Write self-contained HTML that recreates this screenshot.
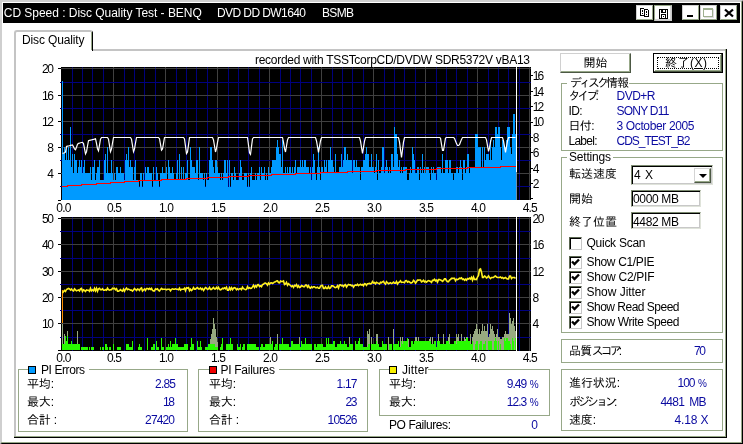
<!DOCTYPE html>
<html><head><meta charset="utf-8"><title>CD Speed : Disc Quality Test</title>
<style>
html,body{margin:0;padding:0;background:#fff;}
body{width:743px;height:444px;position:relative;overflow:hidden;font-family:"Liberation Sans","IPAGothic","Noto Sans CJK JP",sans-serif;font-size:12px;}
.t{position:absolute;white-space:pre;line-height:15px;height:15px;}
</style></head><body>
<div style="position:absolute;left:0px;top:0px;width:743px;height:444px;box-sizing:border-box;background:#fff;border:solid;border-width:2px 1px 1px 2px;border-color:#cfcfcf #000 #000 #cfcfcf;"></div>
<div style="position:absolute;left:741px;top:1px;width:1px;height:442px;box-sizing:border-box;background:#97a888"></div>
<div style="position:absolute;left:1px;top:442px;width:741px;height:1px;box-sizing:border-box;background:#97a888"></div>
<div style="position:absolute;left:3px;top:3px;width:737px;height:20px;box-sizing:border-box;background:#000"></div>
<div style="position:absolute;left:636px;top:5px;width:17px;height:15px;box-sizing:border-box;background:#fff;border:1px solid;border-color:#d0d0d0 #97a888 #97a888 #d0d0d0;"><svg width="15" height="13" viewBox="0 0 15 13" style="position:absolute;left:0;top:0" shape-rendering="crispEdges"><path d="M3.5 2.5h3l1 1v6h-4z" fill="#fff" stroke="#000"/><path d="M7.5 3.5h3l1 1v6h-4z" fill="#fff" stroke="#000"/><path d="M5 4h1v2h-1zM5 7h1v1h-1zM9 5h1v2h-1zM9 8h1v1h-1z" fill="#000"/></svg></div>
<div style="position:absolute;left:654px;top:5px;width:18px;height:16px;box-sizing:border-box;background:#fff;border:1px solid;border-color:#97a888 #c8c8c8 #c8c8c8 #97a888;box-shadow:inset -1px -1px 0 #d4d4d4;"><svg width="16" height="14" viewBox="0 0 16 14" style="position:absolute;left:0;top:0" shape-rendering="crispEdges"><path d="M4.5 3.5h8v9h-8z" fill="#fff" stroke="#000"/><path d="M6 4h5v3h-5z" fill="#000"/><path d="M8 4h2v2h-2z" fill="#fff"/><path d="M6 9h1v3h-1zM10 9h1v3h-1zM6 8h5v1h-5zM8 10h1v1h-1z" fill="#000"/></svg></div>
<div style="position:absolute;left:682px;top:5px;width:17px;height:15px;box-sizing:border-box;background:#fff;border:1px solid;border-color:#d0d0d0 #97a888 #97a888 #d0d0d0;"><div style="position:absolute;left:4px;top:9px;width:6px;height:2px;background:#000"></div></div>
<div style="position:absolute;left:700px;top:5px;width:17px;height:15px;box-sizing:border-box;background:#fff;border:1px solid;border-color:#d0d0d0 #97a888 #97a888 #d0d0d0;"><div style="position:absolute;left:2px;top:2px;width:10px;height:9px;box-sizing:border-box;border:1px solid #9fb090;border-top-width:2px;box-shadow:1px 1px 0 #e0e0e0"></div></div>
<div style="position:absolute;left:720px;top:5px;width:17px;height:15px;box-sizing:border-box;background:#fff;border:1px solid;border-color:#d0d0d0 #97a888 #97a888 #d0d0d0;"><svg width="15" height="13" viewBox="0 0 15 13" style="position:absolute;left:0;top:0"><path d="M4 3.5l8 7M12 3.5l-8 7" stroke="#000" stroke-width="2.3"/></svg></div>
<div style="position:absolute;left:14px;top:49px;width:2px;height:389px;box-sizing:border-box;background:#c4c4c4"></div>
<div style="position:absolute;left:92px;top:49px;width:634px;height:2px;box-sizing:border-box;background:#c4c4c4"></div>
<div style="position:absolute;left:725px;top:49px;width:1px;height:388px;box-sizing:border-box;background:#97a888"></div>
<div style="position:absolute;left:726px;top:49px;width:1px;height:389px;box-sizing:border-box;background:#000"></div>
<div style="position:absolute;left:14px;top:436px;width:712px;height:1px;box-sizing:border-box;background:#97a888"></div>
<div style="position:absolute;left:14px;top:437px;width:713px;height:1px;box-sizing:border-box;background:#000"></div>
<div style="position:absolute;left:14px;top:30px;width:79px;height:21px;box-sizing:border-box;border-top:2px solid #c4c4c4;border-left:2px solid #c4c4c4;border-right:1px solid #000;border-radius:3px 3px 0 0;background:#fff"></div>
<div style="position:absolute;left:91px;top:32px;width:1px;height:18px;box-sizing:border-box;background:#97a888"></div>
<div style="position:absolute;left:560px;top:53px;width:71px;height:20px;box-sizing:border-box;background:#fff;border:1px solid;border-color:#d0d0d0 #4c5844 #4c5844 #d0d0d0;box-shadow:inset -1px -1px 0 #97a888;"></div>
<div style="position:absolute;left:653px;top:53px;width:70px;height:20px;box-sizing:border-box;background:#fff;border:1px solid #000;box-shadow:inset -1px -1px 0 #4c5844, inset 1px 1px 0 #fff, inset -2px -2px 0 #97a888;"><div style="position:absolute;left:3px;top:3px;right:3px;bottom:3px;border:1px dotted #000"></div></div>
<div style="position:absolute;left:561px;top:83px;width:1px;height:68px;box-sizing:border-box;background:#97a888"></div>
<div style="position:absolute;left:722px;top:83px;width:1px;height:68px;box-sizing:border-box;background:#97a888"></div>
<div style="position:absolute;left:561px;top:150px;width:162px;height:1px;box-sizing:border-box;background:#97a888"></div>
<div style="position:absolute;left:561px;top:83px;width:6px;height:1px;box-sizing:border-box;background:#97a888"></div>
<div style="position:absolute;left:629px;top:83px;width:94px;height:1px;box-sizing:border-box;background:#97a888"></div>
<div style="position:absolute;left:561px;top:157px;width:1px;height:176px;box-sizing:border-box;background:#97a888"></div>
<div style="position:absolute;left:722px;top:157px;width:1px;height:176px;box-sizing:border-box;background:#97a888"></div>
<div style="position:absolute;left:561px;top:332px;width:162px;height:1px;box-sizing:border-box;background:#97a888"></div>
<div style="position:absolute;left:561px;top:157px;width:6px;height:1px;box-sizing:border-box;background:#97a888"></div>
<div style="position:absolute;left:613px;top:157px;width:110px;height:1px;box-sizing:border-box;background:#97a888"></div>
<div style="position:absolute;left:561px;top:339px;width:1px;height:24px;box-sizing:border-box;background:#97a888"></div>
<div style="position:absolute;left:722px;top:339px;width:1px;height:24px;box-sizing:border-box;background:#97a888"></div>
<div style="position:absolute;left:561px;top:362px;width:162px;height:1px;box-sizing:border-box;background:#97a888"></div>
<div style="position:absolute;left:561px;top:339px;width:162px;height:1px;box-sizing:border-box;background:#97a888"></div>
<div style="position:absolute;left:561px;top:369px;width:1px;height:62px;box-sizing:border-box;background:#97a888"></div>
<div style="position:absolute;left:722px;top:369px;width:1px;height:62px;box-sizing:border-box;background:#97a888"></div>
<div style="position:absolute;left:561px;top:430px;width:162px;height:1px;box-sizing:border-box;background:#97a888"></div>
<div style="position:absolute;left:561px;top:369px;width:162px;height:1px;box-sizing:border-box;background:#97a888"></div>
<div style="position:absolute;left:18px;top:369px;width:1px;height:63px;box-sizing:border-box;background:#97a888"></div>
<div style="position:absolute;left:187px;top:369px;width:1px;height:63px;box-sizing:border-box;background:#97a888"></div>
<div style="position:absolute;left:18px;top:431px;width:170px;height:1px;box-sizing:border-box;background:#97a888"></div>
<div style="position:absolute;left:18px;top:369px;width:10px;height:1px;box-sizing:border-box;background:#97a888"></div>
<div style="position:absolute;left:89px;top:369px;width:99px;height:1px;box-sizing:border-box;background:#97a888"></div>
<div style="position:absolute;left:198px;top:369px;width:1px;height:63px;box-sizing:border-box;background:#97a888"></div>
<div style="position:absolute;left:367px;top:369px;width:1px;height:63px;box-sizing:border-box;background:#97a888"></div>
<div style="position:absolute;left:198px;top:431px;width:170px;height:1px;box-sizing:border-box;background:#97a888"></div>
<div style="position:absolute;left:198px;top:369px;width:11px;height:1px;box-sizing:border-box;background:#97a888"></div>
<div style="position:absolute;left:279px;top:369px;width:89px;height:1px;box-sizing:border-box;background:#97a888"></div>
<div style="position:absolute;left:379px;top:369px;width:1px;height:47px;box-sizing:border-box;background:#97a888"></div>
<div style="position:absolute;left:549px;top:369px;width:1px;height:47px;box-sizing:border-box;background:#97a888"></div>
<div style="position:absolute;left:379px;top:415px;width:171px;height:1px;box-sizing:border-box;background:#97a888"></div>
<div style="position:absolute;left:379px;top:369px;width:10px;height:1px;box-sizing:border-box;background:#97a888"></div>
<div style="position:absolute;left:428px;top:369px;width:122px;height:1px;box-sizing:border-box;background:#97a888"></div>
<div style="position:absolute;left:28px;top:366px;width:8px;height:8px;box-sizing:border-box;background:#009aff;border:1px solid #000"></div>
<div style="position:absolute;left:209px;top:366px;width:8px;height:8px;box-sizing:border-box;background:#f00000;border:1px solid #000"></div>
<div style="position:absolute;left:389px;top:366px;width:8px;height:8px;box-sizing:border-box;background:#f8f000;border:1px solid #000"></div>
<div style="position:absolute;left:631px;top:165px;width:82px;height:20px;box-sizing:border-box;background:#fff;border:1px solid;border-color:#7c8a70 #dfe3da #dfe3da #7c8a70;box-shadow:inset 1px 1px 0 #000, inset -1px -1px 0 #c8c8c8;"><div style="position:absolute;left:62px;top:2px;width:17px;height:15px;box-sizing:border-box;background:#fff;border:1px solid;border-color:#d4d4d4 #4c5844 #4c5844 #d4d4d4;box-shadow:inset -1px -1px 0 #97a888;"><div style="position:absolute;left:4px;top:5px;width:0;height:0;border-left:4px solid transparent;border-right:4px solid transparent;border-top:4px solid #000"></div></div></div>
<div style="position:absolute;left:631px;top:190px;width:70px;height:17px;box-sizing:border-box;background:#fff;border:1px solid;border-color:#7c8a70 #dfe3da #dfe3da #7c8a70;box-shadow:inset 1px 1px 0 #000, inset -1px -1px 0 #c8c8c8;"></div>
<div style="position:absolute;left:631px;top:212px;width:70px;height:17px;box-sizing:border-box;background:#fff;border:1px solid;border-color:#7c8a70 #dfe3da #dfe3da #7c8a70;box-shadow:inset 1px 1px 0 #000, inset -1px -1px 0 #c8c8c8;"></div>
<div style="position:absolute;left:569px;top:237px;width:13px;height:13px;box-sizing:border-box;background:#fff;border:1px solid;border-color:#5a6650 #c6c6c6 #c6c6c6 #5a6650;box-shadow:inset 1px 1px 0 #000;"></div>
<div style="position:absolute;left:569px;top:256px;width:13px;height:13px;box-sizing:border-box;background:#fff;border:1px solid;border-color:#5a6650 #c6c6c6 #c6c6c6 #5a6650;box-shadow:inset 1px 1px 0 #000;"><svg width="13" height="13" viewBox="0 0 13 13" style="position:absolute;left:-1px;top:-1px"><path d="M3 5.5 L5.5 8 L10 3.5" fill="none" stroke="#000" stroke-width="2.4"/></svg></div>
<div style="position:absolute;left:569px;top:271px;width:13px;height:13px;box-sizing:border-box;background:#fff;border:1px solid;border-color:#5a6650 #c6c6c6 #c6c6c6 #5a6650;box-shadow:inset 1px 1px 0 #000;"><svg width="13" height="13" viewBox="0 0 13 13" style="position:absolute;left:-1px;top:-1px"><path d="M3 5.5 L5.5 8 L10 3.5" fill="none" stroke="#000" stroke-width="2.4"/></svg></div>
<div style="position:absolute;left:569px;top:286px;width:13px;height:13px;box-sizing:border-box;background:#fff;border:1px solid;border-color:#5a6650 #c6c6c6 #c6c6c6 #5a6650;box-shadow:inset 1px 1px 0 #000;"><svg width="13" height="13" viewBox="0 0 13 13" style="position:absolute;left:-1px;top:-1px"><path d="M3 5.5 L5.5 8 L10 3.5" fill="none" stroke="#000" stroke-width="2.4"/></svg></div>
<div style="position:absolute;left:569px;top:301px;width:13px;height:13px;box-sizing:border-box;background:#fff;border:1px solid;border-color:#5a6650 #c6c6c6 #c6c6c6 #5a6650;box-shadow:inset 1px 1px 0 #000;"><svg width="13" height="13" viewBox="0 0 13 13" style="position:absolute;left:-1px;top:-1px"><path d="M3 5.5 L5.5 8 L10 3.5" fill="none" stroke="#000" stroke-width="2.4"/></svg></div>
<div style="position:absolute;left:569px;top:316px;width:13px;height:13px;box-sizing:border-box;background:#fff;border:1px solid;border-color:#5a6650 #c6c6c6 #c6c6c6 #5a6650;box-shadow:inset 1px 1px 0 #000;"><svg width="13" height="13" viewBox="0 0 13 13" style="position:absolute;left:-1px;top:-1px"><path d="M3 5.5 L5.5 8 L10 3.5" fill="none" stroke="#000" stroke-width="2.4"/></svg></div>
<svg width="743" height="444" viewBox="0 0 743 444" style="position:absolute;left:0;top:0" shape-rendering="crispEdges">
<rect x="61" y="67" width="470" height="133" fill="#000"/>
<rect x="61" y="217" width="470" height="134" fill="#000"/>
<rect x="72" y="67" width="1" height="133" fill="#00007c"/>
<rect x="72" y="217" width="1" height="134" fill="#00007c"/>
<rect x="82" y="67" width="1" height="133" fill="#00007c"/>
<rect x="82" y="217" width="1" height="134" fill="#00007c"/>
<rect x="92" y="67" width="1" height="133" fill="#00007c"/>
<rect x="92" y="217" width="1" height="134" fill="#00007c"/>
<rect x="103" y="67" width="1" height="133" fill="#00007c"/>
<rect x="103" y="217" width="1" height="134" fill="#00007c"/>
<rect x="113" y="67" width="1" height="133" fill="#404040"/>
<rect x="113" y="217" width="1" height="134" fill="#404040"/>
<rect x="124" y="67" width="1" height="133" fill="#00007c"/>
<rect x="124" y="217" width="1" height="134" fill="#00007c"/>
<rect x="134" y="67" width="1" height="133" fill="#00007c"/>
<rect x="134" y="217" width="1" height="134" fill="#00007c"/>
<rect x="144" y="67" width="1" height="133" fill="#00007c"/>
<rect x="144" y="217" width="1" height="134" fill="#00007c"/>
<rect x="155" y="67" width="1" height="133" fill="#00007c"/>
<rect x="155" y="217" width="1" height="134" fill="#00007c"/>
<rect x="165" y="67" width="1" height="133" fill="#404040"/>
<rect x="165" y="217" width="1" height="134" fill="#404040"/>
<rect x="176" y="67" width="1" height="133" fill="#00007c"/>
<rect x="176" y="217" width="1" height="134" fill="#00007c"/>
<rect x="186" y="67" width="1" height="133" fill="#00007c"/>
<rect x="186" y="217" width="1" height="134" fill="#00007c"/>
<rect x="196" y="67" width="1" height="133" fill="#00007c"/>
<rect x="196" y="217" width="1" height="134" fill="#00007c"/>
<rect x="207" y="67" width="1" height="133" fill="#00007c"/>
<rect x="207" y="217" width="1" height="134" fill="#00007c"/>
<rect x="217" y="67" width="1" height="133" fill="#404040"/>
<rect x="217" y="217" width="1" height="134" fill="#404040"/>
<rect x="228" y="67" width="1" height="133" fill="#00007c"/>
<rect x="228" y="217" width="1" height="134" fill="#00007c"/>
<rect x="238" y="67" width="1" height="133" fill="#00007c"/>
<rect x="238" y="217" width="1" height="134" fill="#00007c"/>
<rect x="248" y="67" width="1" height="133" fill="#00007c"/>
<rect x="248" y="217" width="1" height="134" fill="#00007c"/>
<rect x="259" y="67" width="1" height="133" fill="#00007c"/>
<rect x="259" y="217" width="1" height="134" fill="#00007c"/>
<rect x="269" y="67" width="1" height="133" fill="#404040"/>
<rect x="269" y="217" width="1" height="134" fill="#404040"/>
<rect x="280" y="67" width="1" height="133" fill="#00007c"/>
<rect x="280" y="217" width="1" height="134" fill="#00007c"/>
<rect x="290" y="67" width="1" height="133" fill="#00007c"/>
<rect x="290" y="217" width="1" height="134" fill="#00007c"/>
<rect x="300" y="67" width="1" height="133" fill="#00007c"/>
<rect x="300" y="217" width="1" height="134" fill="#00007c"/>
<rect x="311" y="67" width="1" height="133" fill="#00007c"/>
<rect x="311" y="217" width="1" height="134" fill="#00007c"/>
<rect x="321" y="67" width="1" height="133" fill="#404040"/>
<rect x="321" y="217" width="1" height="134" fill="#404040"/>
<rect x="332" y="67" width="1" height="133" fill="#00007c"/>
<rect x="332" y="217" width="1" height="134" fill="#00007c"/>
<rect x="342" y="67" width="1" height="133" fill="#00007c"/>
<rect x="342" y="217" width="1" height="134" fill="#00007c"/>
<rect x="352" y="67" width="1" height="133" fill="#00007c"/>
<rect x="352" y="217" width="1" height="134" fill="#00007c"/>
<rect x="363" y="67" width="1" height="133" fill="#00007c"/>
<rect x="363" y="217" width="1" height="134" fill="#00007c"/>
<rect x="373" y="67" width="1" height="133" fill="#404040"/>
<rect x="373" y="217" width="1" height="134" fill="#404040"/>
<rect x="384" y="67" width="1" height="133" fill="#00007c"/>
<rect x="384" y="217" width="1" height="134" fill="#00007c"/>
<rect x="394" y="67" width="1" height="133" fill="#00007c"/>
<rect x="394" y="217" width="1" height="134" fill="#00007c"/>
<rect x="404" y="67" width="1" height="133" fill="#00007c"/>
<rect x="404" y="217" width="1" height="134" fill="#00007c"/>
<rect x="415" y="67" width="1" height="133" fill="#00007c"/>
<rect x="415" y="217" width="1" height="134" fill="#00007c"/>
<rect x="425" y="67" width="1" height="133" fill="#404040"/>
<rect x="425" y="217" width="1" height="134" fill="#404040"/>
<rect x="436" y="67" width="1" height="133" fill="#00007c"/>
<rect x="436" y="217" width="1" height="134" fill="#00007c"/>
<rect x="446" y="67" width="1" height="133" fill="#00007c"/>
<rect x="446" y="217" width="1" height="134" fill="#00007c"/>
<rect x="456" y="67" width="1" height="133" fill="#00007c"/>
<rect x="456" y="217" width="1" height="134" fill="#00007c"/>
<rect x="467" y="67" width="1" height="133" fill="#00007c"/>
<rect x="467" y="217" width="1" height="134" fill="#00007c"/>
<rect x="477" y="67" width="1" height="133" fill="#404040"/>
<rect x="477" y="217" width="1" height="134" fill="#404040"/>
<rect x="488" y="67" width="1" height="133" fill="#00007c"/>
<rect x="488" y="217" width="1" height="134" fill="#00007c"/>
<rect x="498" y="67" width="1" height="133" fill="#00007c"/>
<rect x="498" y="217" width="1" height="134" fill="#00007c"/>
<rect x="508" y="67" width="1" height="133" fill="#00007c"/>
<rect x="508" y="217" width="1" height="134" fill="#00007c"/>
<rect x="519" y="67" width="1" height="133" fill="#00007c"/>
<rect x="519" y="217" width="1" height="134" fill="#00007c"/>
<rect x="529" y="67" width="1" height="133" fill="#404040"/>
<rect x="529" y="217" width="1" height="134" fill="#404040"/>
<rect x="61" y="186" width="470" height="1" fill="#000080"/>
<rect x="61" y="173" width="470" height="1" fill="#404040"/>
<rect x="61" y="160" width="470" height="1" fill="#000080"/>
<rect x="61" y="147" width="470" height="1" fill="#404040"/>
<rect x="61" y="134" width="470" height="1" fill="#000080"/>
<rect x="61" y="121" width="470" height="1" fill="#404040"/>
<rect x="61" y="108" width="470" height="1" fill="#000080"/>
<rect x="61" y="95" width="470" height="1" fill="#404040"/>
<rect x="61" y="82" width="470" height="1" fill="#000080"/>
<rect x="61" y="68" width="470" height="1" fill="#404040"/>
<rect x="61" y="337" width="470" height="1" fill="#000080"/>
<rect x="61" y="323" width="470" height="1" fill="#404040"/>
<rect x="61" y="310" width="470" height="1" fill="#000080"/>
<rect x="61" y="297" width="470" height="1" fill="#404040"/>
<rect x="61" y="284" width="470" height="1" fill="#000080"/>
<rect x="61" y="271" width="470" height="1" fill="#404040"/>
<rect x="61" y="258" width="470" height="1" fill="#000080"/>
<rect x="61" y="244" width="470" height="1" fill="#404040"/>
<rect x="61" y="231" width="470" height="1" fill="#000080"/>
<rect x="61" y="218" width="470" height="1" fill="#404040"/>
<g fill="#009aff">
<rect x="62" y="81" width="1" height="119"/>
<rect x="63" y="154" width="1" height="46"/>
<rect x="64" y="147" width="1" height="53"/>
<rect x="65" y="160" width="1" height="40"/>
<rect x="66" y="147" width="1" height="53"/>
<rect x="67" y="160" width="1" height="40"/>
<rect x="68" y="147" width="1" height="53"/>
<rect x="69" y="160" width="1" height="40"/>
<rect x="70" y="127" width="1" height="73"/>
<rect x="71" y="167" width="1" height="33"/>
<rect x="72" y="154" width="1" height="46"/>
<rect x="73" y="173" width="1" height="27"/>
<rect x="74" y="154" width="1" height="46"/>
<rect x="75" y="160" width="1" height="40"/>
<rect x="76" y="160" width="1" height="40"/>
<rect x="77" y="173" width="1" height="27"/>
<rect x="78" y="167" width="1" height="33"/>
<rect x="79" y="160" width="1" height="40"/>
<rect x="80" y="167" width="1" height="33"/>
<rect x="81" y="160" width="1" height="40"/>
<rect x="82" y="173" width="1" height="27"/>
<rect x="83" y="167" width="1" height="33"/>
<rect x="84" y="160" width="1" height="40"/>
<rect x="85" y="173" width="1" height="27"/>
<rect x="86" y="173" width="1" height="27"/>
<rect x="87" y="173" width="1" height="27"/>
<rect x="88" y="173" width="1" height="27"/>
<rect x="89" y="173" width="1" height="27"/>
<rect x="90" y="167" width="1" height="33"/>
<rect x="91" y="180" width="1" height="20"/>
<rect x="92" y="167" width="1" height="33"/>
<rect x="93" y="167" width="1" height="33"/>
<rect x="94" y="160" width="1" height="40"/>
<rect x="95" y="180" width="1" height="20"/>
<rect x="96" y="173" width="1" height="27"/>
<rect x="97" y="167" width="1" height="33"/>
<rect x="98" y="167" width="1" height="33"/>
<rect x="99" y="160" width="1" height="40"/>
<rect x="100" y="180" width="1" height="20"/>
<rect x="101" y="180" width="1" height="20"/>
<rect x="102" y="180" width="1" height="20"/>
<rect x="103" y="180" width="1" height="20"/>
<rect x="104" y="160" width="1" height="40"/>
<rect x="105" y="154" width="1" height="46"/>
<rect x="106" y="173" width="1" height="27"/>
<rect x="107" y="147" width="1" height="53"/>
<rect x="108" y="173" width="1" height="27"/>
<rect x="109" y="173" width="1" height="27"/>
<rect x="110" y="173" width="1" height="27"/>
<rect x="111" y="160" width="1" height="40"/>
<rect x="112" y="173" width="1" height="27"/>
<rect x="113" y="180" width="1" height="20"/>
<rect x="114" y="173" width="1" height="27"/>
<rect x="115" y="180" width="1" height="20"/>
<rect x="116" y="167" width="1" height="33"/>
<rect x="117" y="167" width="1" height="33"/>
<rect x="118" y="173" width="1" height="27"/>
<rect x="119" y="173" width="1" height="27"/>
<rect x="120" y="167" width="1" height="33"/>
<rect x="121" y="173" width="1" height="27"/>
<rect x="122" y="173" width="1" height="27"/>
<rect x="123" y="173" width="1" height="27"/>
<rect x="124" y="180" width="1" height="20"/>
<rect x="125" y="160" width="1" height="40"/>
<rect x="126" y="154" width="1" height="46"/>
<rect x="127" y="160" width="1" height="40"/>
<rect x="128" y="147" width="1" height="53"/>
<rect x="129" y="167" width="1" height="33"/>
<rect x="130" y="160" width="1" height="40"/>
<rect x="131" y="167" width="1" height="33"/>
<rect x="132" y="167" width="1" height="33"/>
<rect x="133" y="180" width="1" height="20"/>
<rect x="134" y="167" width="1" height="33"/>
<rect x="135" y="160" width="1" height="40"/>
<rect x="136" y="180" width="1" height="20"/>
<rect x="137" y="180" width="1" height="20"/>
<rect x="138" y="180" width="1" height="20"/>
<rect x="139" y="187" width="1" height="13"/>
<rect x="140" y="173" width="1" height="27"/>
<rect x="141" y="173" width="1" height="27"/>
<rect x="142" y="187" width="1" height="13"/>
<rect x="143" y="173" width="1" height="27"/>
<rect x="144" y="180" width="1" height="20"/>
<rect x="145" y="167" width="1" height="33"/>
<rect x="146" y="173" width="1" height="27"/>
<rect x="147" y="167" width="1" height="33"/>
<rect x="148" y="167" width="1" height="33"/>
<rect x="149" y="173" width="1" height="27"/>
<rect x="150" y="173" width="1" height="27"/>
<rect x="151" y="173" width="1" height="27"/>
<rect x="152" y="187" width="1" height="13"/>
<rect x="153" y="167" width="1" height="33"/>
<rect x="154" y="180" width="1" height="20"/>
<rect x="155" y="180" width="1" height="20"/>
<rect x="156" y="167" width="1" height="33"/>
<rect x="157" y="173" width="1" height="27"/>
<rect x="158" y="180" width="1" height="20"/>
<rect x="159" y="187" width="1" height="13"/>
<rect x="160" y="173" width="1" height="27"/>
<rect x="161" y="173" width="1" height="27"/>
<rect x="162" y="167" width="1" height="33"/>
<rect x="163" y="173" width="1" height="27"/>
<rect x="164" y="173" width="1" height="27"/>
<rect x="165" y="173" width="1" height="27"/>
<rect x="166" y="167" width="1" height="33"/>
<rect x="167" y="180" width="1" height="20"/>
<rect x="168" y="160" width="1" height="40"/>
<rect x="169" y="167" width="1" height="33"/>
<rect x="170" y="173" width="1" height="27"/>
<rect x="171" y="173" width="1" height="27"/>
<rect x="172" y="167" width="1" height="33"/>
<rect x="173" y="173" width="1" height="27"/>
<rect x="174" y="180" width="1" height="20"/>
<rect x="175" y="180" width="1" height="20"/>
<rect x="176" y="173" width="1" height="27"/>
<rect x="177" y="160" width="1" height="40"/>
<rect x="178" y="180" width="1" height="20"/>
<rect x="179" y="154" width="1" height="46"/>
<rect x="180" y="180" width="1" height="20"/>
<rect x="181" y="167" width="1" height="33"/>
<rect x="182" y="180" width="1" height="20"/>
<rect x="183" y="167" width="1" height="33"/>
<rect x="184" y="180" width="1" height="20"/>
<rect x="185" y="173" width="1" height="27"/>
<rect x="186" y="173" width="1" height="27"/>
<rect x="187" y="160" width="1" height="40"/>
<rect x="188" y="180" width="1" height="20"/>
<rect x="189" y="180" width="1" height="20"/>
<rect x="190" y="147" width="1" height="53"/>
<rect x="191" y="160" width="1" height="40"/>
<rect x="192" y="167" width="1" height="33"/>
<rect x="193" y="167" width="1" height="33"/>
<rect x="194" y="167" width="1" height="33"/>
<rect x="195" y="173" width="1" height="27"/>
<rect x="196" y="160" width="1" height="40"/>
<rect x="197" y="160" width="1" height="40"/>
<rect x="198" y="180" width="1" height="20"/>
<rect x="199" y="147" width="1" height="53"/>
<rect x="200" y="173" width="1" height="27"/>
<rect x="201" y="173" width="1" height="27"/>
<rect x="202" y="173" width="1" height="27"/>
<rect x="203" y="180" width="1" height="20"/>
<rect x="204" y="173" width="1" height="27"/>
<rect x="205" y="187" width="1" height="13"/>
<rect x="206" y="173" width="1" height="27"/>
<rect x="207" y="180" width="1" height="20"/>
<rect x="208" y="180" width="1" height="20"/>
<rect x="209" y="160" width="1" height="40"/>
<rect x="210" y="147" width="1" height="53"/>
<rect x="211" y="147" width="1" height="53"/>
<rect x="212" y="160" width="1" height="40"/>
<rect x="213" y="167" width="1" height="33"/>
<rect x="214" y="173" width="1" height="27"/>
<rect x="215" y="160" width="1" height="40"/>
<rect x="216" y="160" width="1" height="40"/>
<rect x="217" y="167" width="1" height="33"/>
<rect x="218" y="173" width="1" height="27"/>
<rect x="219" y="173" width="1" height="27"/>
<rect x="220" y="180" width="1" height="20"/>
<rect x="221" y="173" width="1" height="27"/>
<rect x="222" y="180" width="1" height="20"/>
<rect x="223" y="173" width="1" height="27"/>
<rect x="224" y="160" width="1" height="40"/>
<rect x="225" y="160" width="1" height="40"/>
<rect x="226" y="173" width="1" height="27"/>
<rect x="227" y="160" width="1" height="40"/>
<rect x="228" y="187" width="1" height="13"/>
<rect x="229" y="160" width="1" height="40"/>
<rect x="230" y="187" width="1" height="13"/>
<rect x="231" y="173" width="1" height="27"/>
<rect x="232" y="173" width="1" height="27"/>
<rect x="233" y="180" width="1" height="20"/>
<rect x="234" y="167" width="1" height="33"/>
<rect x="235" y="173" width="1" height="27"/>
<rect x="236" y="180" width="1" height="20"/>
<rect x="237" y="180" width="1" height="20"/>
<rect x="238" y="180" width="1" height="20"/>
<rect x="239" y="173" width="1" height="27"/>
<rect x="240" y="160" width="1" height="40"/>
<rect x="241" y="167" width="1" height="33"/>
<rect x="242" y="180" width="1" height="20"/>
<rect x="243" y="180" width="1" height="20"/>
<rect x="244" y="173" width="1" height="27"/>
<rect x="245" y="173" width="1" height="27"/>
<rect x="246" y="173" width="1" height="27"/>
<rect x="247" y="187" width="1" height="13"/>
<rect x="248" y="173" width="1" height="27"/>
<rect x="249" y="187" width="1" height="13"/>
<rect x="250" y="173" width="1" height="27"/>
<rect x="251" y="167" width="1" height="33"/>
<rect x="252" y="180" width="1" height="20"/>
<rect x="253" y="180" width="1" height="20"/>
<rect x="254" y="180" width="1" height="20"/>
<rect x="255" y="173" width="1" height="27"/>
<rect x="256" y="180" width="1" height="20"/>
<rect x="257" y="173" width="1" height="27"/>
<rect x="258" y="173" width="1" height="27"/>
<rect x="259" y="167" width="1" height="33"/>
<rect x="260" y="180" width="1" height="20"/>
<rect x="261" y="167" width="1" height="33"/>
<rect x="262" y="173" width="1" height="27"/>
<rect x="263" y="173" width="1" height="27"/>
<rect x="264" y="167" width="1" height="33"/>
<rect x="265" y="180" width="1" height="20"/>
<rect x="266" y="173" width="1" height="27"/>
<rect x="267" y="180" width="1" height="20"/>
<rect x="268" y="167" width="1" height="33"/>
<rect x="269" y="173" width="1" height="27"/>
<rect x="270" y="173" width="1" height="27"/>
<rect x="271" y="167" width="1" height="33"/>
<rect x="272" y="160" width="1" height="40"/>
<rect x="273" y="160" width="1" height="40"/>
<rect x="274" y="160" width="1" height="40"/>
<rect x="275" y="160" width="1" height="40"/>
<rect x="276" y="147" width="1" height="53"/>
<rect x="277" y="140" width="1" height="60"/>
<rect x="278" y="147" width="1" height="53"/>
<rect x="279" y="154" width="1" height="46"/>
<rect x="280" y="154" width="1" height="46"/>
<rect x="281" y="167" width="1" height="33"/>
<rect x="282" y="140" width="1" height="60"/>
<rect x="283" y="173" width="1" height="27"/>
<rect x="284" y="173" width="1" height="27"/>
<rect x="285" y="167" width="1" height="33"/>
<rect x="286" y="173" width="1" height="27"/>
<rect x="287" y="167" width="1" height="33"/>
<rect x="288" y="173" width="1" height="27"/>
<rect x="289" y="167" width="1" height="33"/>
<rect x="290" y="167" width="1" height="33"/>
<rect x="291" y="173" width="1" height="27"/>
<rect x="292" y="167" width="1" height="33"/>
<rect x="293" y="173" width="1" height="27"/>
<rect x="294" y="167" width="1" height="33"/>
<rect x="295" y="160" width="1" height="40"/>
<rect x="296" y="173" width="1" height="27"/>
<rect x="297" y="167" width="1" height="33"/>
<rect x="298" y="167" width="1" height="33"/>
<rect x="299" y="167" width="1" height="33"/>
<rect x="300" y="160" width="1" height="40"/>
<rect x="301" y="167" width="1" height="33"/>
<rect x="302" y="160" width="1" height="40"/>
<rect x="303" y="167" width="1" height="33"/>
<rect x="304" y="160" width="1" height="40"/>
<rect x="305" y="160" width="1" height="40"/>
<rect x="306" y="167" width="1" height="33"/>
<rect x="307" y="167" width="1" height="33"/>
<rect x="308" y="167" width="1" height="33"/>
<rect x="309" y="173" width="1" height="27"/>
<rect x="310" y="167" width="1" height="33"/>
<rect x="311" y="180" width="1" height="20"/>
<rect x="312" y="167" width="1" height="33"/>
<rect x="313" y="154" width="1" height="46"/>
<rect x="314" y="160" width="1" height="40"/>
<rect x="315" y="173" width="1" height="27"/>
<rect x="316" y="180" width="1" height="20"/>
<rect x="317" y="167" width="1" height="33"/>
<rect x="318" y="147" width="1" height="53"/>
<rect x="319" y="167" width="1" height="33"/>
<rect x="320" y="180" width="1" height="20"/>
<rect x="321" y="167" width="1" height="33"/>
<rect x="322" y="167" width="1" height="33"/>
<rect x="323" y="173" width="1" height="27"/>
<rect x="324" y="160" width="1" height="40"/>
<rect x="325" y="167" width="1" height="33"/>
<rect x="326" y="160" width="1" height="40"/>
<rect x="327" y="173" width="1" height="27"/>
<rect x="328" y="160" width="1" height="40"/>
<rect x="329" y="160" width="1" height="40"/>
<rect x="330" y="147" width="1" height="53"/>
<rect x="331" y="160" width="1" height="40"/>
<rect x="332" y="160" width="1" height="40"/>
<rect x="333" y="167" width="1" height="33"/>
<rect x="334" y="173" width="1" height="27"/>
<rect x="335" y="154" width="1" height="46"/>
<rect x="336" y="173" width="1" height="27"/>
<rect x="337" y="173" width="1" height="27"/>
<rect x="338" y="173" width="1" height="27"/>
<rect x="339" y="167" width="1" height="33"/>
<rect x="340" y="167" width="1" height="33"/>
<rect x="341" y="154" width="1" height="46"/>
<rect x="342" y="167" width="1" height="33"/>
<rect x="343" y="160" width="1" height="40"/>
<rect x="344" y="147" width="1" height="53"/>
<rect x="345" y="147" width="1" height="53"/>
<rect x="346" y="160" width="1" height="40"/>
<rect x="347" y="154" width="1" height="46"/>
<rect x="348" y="160" width="1" height="40"/>
<rect x="349" y="160" width="1" height="40"/>
<rect x="350" y="160" width="1" height="40"/>
<rect x="351" y="160" width="1" height="40"/>
<rect x="352" y="173" width="1" height="27"/>
<rect x="353" y="160" width="1" height="40"/>
<rect x="354" y="160" width="1" height="40"/>
<rect x="355" y="167" width="1" height="33"/>
<rect x="356" y="160" width="1" height="40"/>
<rect x="357" y="167" width="1" height="33"/>
<rect x="358" y="167" width="1" height="33"/>
<rect x="359" y="167" width="1" height="33"/>
<rect x="360" y="180" width="1" height="20"/>
<rect x="361" y="167" width="1" height="33"/>
<rect x="362" y="167" width="1" height="33"/>
<rect x="363" y="160" width="1" height="40"/>
<rect x="364" y="160" width="1" height="40"/>
<rect x="365" y="154" width="1" height="46"/>
<rect x="366" y="147" width="1" height="53"/>
<rect x="367" y="154" width="1" height="46"/>
<rect x="368" y="154" width="1" height="46"/>
<rect x="369" y="167" width="1" height="33"/>
<rect x="370" y="167" width="1" height="33"/>
<rect x="371" y="154" width="1" height="46"/>
<rect x="372" y="167" width="1" height="33"/>
<rect x="373" y="167" width="1" height="33"/>
<rect x="374" y="173" width="1" height="27"/>
<rect x="375" y="167" width="1" height="33"/>
<rect x="376" y="154" width="1" height="46"/>
<rect x="377" y="180" width="1" height="20"/>
<rect x="378" y="160" width="1" height="40"/>
<rect x="379" y="173" width="1" height="27"/>
<rect x="380" y="173" width="1" height="27"/>
<rect x="381" y="167" width="1" height="33"/>
<rect x="382" y="147" width="1" height="53"/>
<rect x="383" y="147" width="1" height="53"/>
<rect x="384" y="173" width="1" height="27"/>
<rect x="385" y="167" width="1" height="33"/>
<rect x="386" y="160" width="1" height="40"/>
<rect x="387" y="167" width="1" height="33"/>
<rect x="388" y="173" width="1" height="27"/>
<rect x="389" y="167" width="1" height="33"/>
<rect x="390" y="173" width="1" height="27"/>
<rect x="391" y="154" width="1" height="46"/>
<rect x="392" y="154" width="1" height="46"/>
<rect x="393" y="167" width="1" height="33"/>
<rect x="394" y="127" width="1" height="73"/>
<rect x="395" y="134" width="1" height="66"/>
<rect x="396" y="134" width="1" height="66"/>
<rect x="397" y="154" width="1" height="46"/>
<rect x="398" y="167" width="1" height="33"/>
<rect x="399" y="160" width="1" height="40"/>
<rect x="400" y="173" width="1" height="27"/>
<rect x="401" y="167" width="1" height="33"/>
<rect x="402" y="173" width="1" height="27"/>
<rect x="403" y="167" width="1" height="33"/>
<rect x="404" y="167" width="1" height="33"/>
<rect x="405" y="167" width="1" height="33"/>
<rect x="406" y="167" width="1" height="33"/>
<rect x="407" y="180" width="1" height="20"/>
<rect x="408" y="180" width="1" height="20"/>
<rect x="409" y="173" width="1" height="27"/>
<rect x="410" y="167" width="1" height="33"/>
<rect x="411" y="173" width="1" height="27"/>
<rect x="412" y="147" width="1" height="53"/>
<rect x="413" y="154" width="1" height="46"/>
<rect x="414" y="160" width="1" height="40"/>
<rect x="415" y="173" width="1" height="27"/>
<rect x="416" y="173" width="1" height="27"/>
<rect x="417" y="167" width="1" height="33"/>
<rect x="418" y="167" width="1" height="33"/>
<rect x="419" y="180" width="1" height="20"/>
<rect x="420" y="167" width="1" height="33"/>
<rect x="421" y="173" width="1" height="27"/>
<rect x="422" y="154" width="1" height="46"/>
<rect x="423" y="173" width="1" height="27"/>
<rect x="424" y="167" width="1" height="33"/>
<rect x="425" y="173" width="1" height="27"/>
<rect x="426" y="167" width="1" height="33"/>
<rect x="427" y="167" width="1" height="33"/>
<rect x="428" y="167" width="1" height="33"/>
<rect x="429" y="173" width="1" height="27"/>
<rect x="430" y="180" width="1" height="20"/>
<rect x="431" y="167" width="1" height="33"/>
<rect x="432" y="173" width="1" height="27"/>
<rect x="433" y="167" width="1" height="33"/>
<rect x="434" y="173" width="1" height="27"/>
<rect x="435" y="173" width="1" height="27"/>
<rect x="436" y="180" width="1" height="20"/>
<rect x="437" y="167" width="1" height="33"/>
<rect x="438" y="167" width="1" height="33"/>
<rect x="439" y="167" width="1" height="33"/>
<rect x="440" y="167" width="1" height="33"/>
<rect x="441" y="173" width="1" height="27"/>
<rect x="442" y="154" width="1" height="46"/>
<rect x="443" y="173" width="1" height="27"/>
<rect x="444" y="173" width="1" height="27"/>
<rect x="445" y="160" width="1" height="40"/>
<rect x="446" y="160" width="1" height="40"/>
<rect x="447" y="160" width="1" height="40"/>
<rect x="448" y="173" width="1" height="27"/>
<rect x="449" y="160" width="1" height="40"/>
<rect x="450" y="160" width="1" height="40"/>
<rect x="451" y="173" width="1" height="27"/>
<rect x="452" y="173" width="1" height="27"/>
<rect x="453" y="180" width="1" height="20"/>
<rect x="454" y="173" width="1" height="27"/>
<rect x="455" y="173" width="1" height="27"/>
<rect x="456" y="167" width="1" height="33"/>
<rect x="457" y="167" width="1" height="33"/>
<rect x="458" y="173" width="1" height="27"/>
<rect x="459" y="167" width="1" height="33"/>
<rect x="460" y="160" width="1" height="40"/>
<rect x="461" y="167" width="1" height="33"/>
<rect x="462" y="180" width="1" height="20"/>
<rect x="463" y="160" width="1" height="40"/>
<rect x="464" y="160" width="1" height="40"/>
<rect x="465" y="173" width="1" height="27"/>
<rect x="466" y="167" width="1" height="33"/>
<rect x="467" y="154" width="1" height="46"/>
<rect x="468" y="154" width="1" height="46"/>
<rect x="469" y="173" width="1" height="27"/>
<rect x="470" y="167" width="1" height="33"/>
<rect x="471" y="167" width="1" height="33"/>
<rect x="472" y="167" width="1" height="33"/>
<rect x="473" y="167" width="1" height="33"/>
<rect x="474" y="167" width="1" height="33"/>
<rect x="475" y="134" width="1" height="66"/>
<rect x="476" y="134" width="1" height="66"/>
<rect x="477" y="134" width="1" height="66"/>
<rect x="478" y="147" width="1" height="53"/>
<rect x="479" y="147" width="1" height="53"/>
<rect x="480" y="147" width="1" height="53"/>
<rect x="481" y="167" width="1" height="33"/>
<rect x="482" y="147" width="1" height="53"/>
<rect x="483" y="167" width="1" height="33"/>
<rect x="484" y="147" width="1" height="53"/>
<rect x="485" y="160" width="1" height="40"/>
<rect x="486" y="154" width="1" height="46"/>
<rect x="487" y="154" width="1" height="46"/>
<rect x="488" y="154" width="1" height="46"/>
<rect x="489" y="160" width="1" height="40"/>
<rect x="490" y="140" width="1" height="60"/>
<rect x="491" y="160" width="1" height="40"/>
<rect x="492" y="147" width="1" height="53"/>
<rect x="493" y="140" width="1" height="60"/>
<rect x="494" y="147" width="1" height="53"/>
<rect x="495" y="127" width="1" height="73"/>
<rect x="496" y="127" width="1" height="73"/>
<rect x="497" y="134" width="1" height="66"/>
<rect x="498" y="127" width="1" height="73"/>
<rect x="499" y="127" width="1" height="73"/>
<rect x="500" y="147" width="1" height="53"/>
<rect x="501" y="160" width="1" height="40"/>
<rect x="502" y="140" width="1" height="60"/>
<rect x="503" y="140" width="1" height="60"/>
<rect x="504" y="147" width="1" height="53"/>
<rect x="505" y="147" width="1" height="53"/>
<rect x="506" y="140" width="1" height="60"/>
<rect x="507" y="127" width="1" height="73"/>
<rect x="508" y="127" width="1" height="73"/>
<rect x="509" y="127" width="1" height="73"/>
<rect x="510" y="147" width="1" height="53"/>
<rect x="511" y="154" width="1" height="46"/>
<rect x="512" y="134" width="1" height="66"/>
<rect x="513" y="114" width="1" height="86"/>
<rect x="514" y="114" width="1" height="86"/>
<rect x="515" y="134" width="1" height="66"/>
<rect x="516" y="134" width="1" height="66"/>
</g>
<g>
<rect x="62" y="324" width="1" height="26" fill="#98aa80"/>
<rect x="62" y="344" width="1" height="6" fill="#28fa00"/>
<rect x="63" y="344" width="1" height="6" fill="#28fa00"/>
<rect x="64" y="334" width="1" height="16" fill="#98aa80"/>
<rect x="64" y="344" width="1" height="6" fill="#28fa00"/>
<rect x="65" y="336" width="1" height="14" fill="#28fa00"/>
<rect x="66" y="341" width="1" height="9" fill="#28fa00"/>
<rect x="67" y="331" width="1" height="19" fill="#98aa80"/>
<rect x="67" y="336" width="1" height="14" fill="#28fa00"/>
<rect x="68" y="344" width="1" height="6" fill="#28fa00"/>
<rect x="69" y="344" width="1" height="6" fill="#28fa00"/>
<rect x="70" y="344" width="1" height="6" fill="#28fa00"/>
<rect x="71" y="341" width="1" height="9" fill="#28fa00"/>
<rect x="72" y="344" width="1" height="6" fill="#28fa00"/>
<rect x="73" y="344" width="1" height="6" fill="#28fa00"/>
<rect x="74" y="344" width="1" height="6" fill="#28fa00"/>
<rect x="75" y="344" width="1" height="6" fill="#28fa00"/>
<rect x="76" y="344" width="1" height="6" fill="#28fa00"/>
<rect x="77" y="331" width="1" height="19" fill="#98aa80"/>
<rect x="77" y="344" width="1" height="6" fill="#28fa00"/>
<rect x="78" y="344" width="1" height="6" fill="#28fa00"/>
<rect x="79" y="344" width="1" height="6" fill="#28fa00"/>
<rect x="81" y="347" width="1" height="3" fill="#28fa00"/>
<rect x="82" y="347" width="1" height="3" fill="#28fa00"/>
<rect x="83" y="347" width="1" height="3" fill="#28fa00"/>
<rect x="84" y="347" width="1" height="3" fill="#28fa00"/>
<rect x="85" y="347" width="1" height="3" fill="#28fa00"/>
<rect x="86" y="347" width="1" height="3" fill="#28fa00"/>
<rect x="87" y="347" width="1" height="3" fill="#28fa00"/>
<rect x="89" y="347" width="1" height="3" fill="#28fa00"/>
<rect x="91" y="347" width="1" height="3" fill="#28fa00"/>
<rect x="92" y="347" width="1" height="3" fill="#28fa00"/>
<rect x="93" y="347" width="1" height="3" fill="#28fa00"/>
<rect x="100" y="347" width="1" height="3" fill="#28fa00"/>
<rect x="102" y="347" width="1" height="3" fill="#28fa00"/>
<rect x="103" y="347" width="1" height="3" fill="#28fa00"/>
<rect x="105" y="344" width="1" height="6" fill="#28fa00"/>
<rect x="106" y="344" width="1" height="6" fill="#28fa00"/>
<rect x="107" y="347" width="1" height="3" fill="#28fa00"/>
<rect x="109" y="347" width="1" height="3" fill="#28fa00"/>
<rect x="110" y="347" width="1" height="3" fill="#28fa00"/>
<rect x="113" y="344" width="1" height="6" fill="#28fa00"/>
<rect x="117" y="347" width="1" height="3" fill="#28fa00"/>
<rect x="118" y="347" width="1" height="3" fill="#28fa00"/>
<rect x="119" y="347" width="1" height="3" fill="#28fa00"/>
<rect x="120" y="347" width="1" height="3" fill="#28fa00"/>
<rect x="126" y="344" width="1" height="6" fill="#28fa00"/>
<rect x="127" y="344" width="1" height="6" fill="#28fa00"/>
<rect x="128" y="344" width="1" height="6" fill="#28fa00"/>
<rect x="129" y="347" width="1" height="3" fill="#28fa00"/>
<rect x="130" y="347" width="1" height="3" fill="#28fa00"/>
<rect x="131" y="347" width="1" height="3" fill="#28fa00"/>
<rect x="132" y="341" width="1" height="9" fill="#28fa00"/>
<rect x="138" y="347" width="1" height="3" fill="#28fa00"/>
<rect x="139" y="344" width="1" height="6" fill="#28fa00"/>
<rect x="140" y="347" width="1" height="3" fill="#28fa00"/>
<rect x="141" y="347" width="1" height="3" fill="#28fa00"/>
<rect x="147" y="338" width="1" height="12" fill="#28fa00"/>
<rect x="151" y="347" width="1" height="3" fill="#28fa00"/>
<rect x="152" y="347" width="1" height="3" fill="#28fa00"/>
<rect x="153" y="344" width="1" height="6" fill="#28fa00"/>
<rect x="154" y="344" width="1" height="6" fill="#28fa00"/>
<rect x="156" y="341" width="1" height="9" fill="#28fa00"/>
<rect x="157" y="347" width="1" height="3" fill="#28fa00"/>
<rect x="158" y="347" width="1" height="3" fill="#28fa00"/>
<rect x="161" y="338" width="1" height="12" fill="#28fa00"/>
<rect x="162" y="347" width="1" height="3" fill="#28fa00"/>
<rect x="163" y="347" width="1" height="3" fill="#28fa00"/>
<rect x="166" y="347" width="1" height="3" fill="#28fa00"/>
<rect x="167" y="347" width="1" height="3" fill="#28fa00"/>
<rect x="168" y="344" width="1" height="6" fill="#28fa00"/>
<rect x="169" y="347" width="1" height="3" fill="#28fa00"/>
<rect x="170" y="341" width="1" height="9" fill="#28fa00"/>
<rect x="171" y="347" width="1" height="3" fill="#28fa00"/>
<rect x="172" y="344" width="1" height="6" fill="#28fa00"/>
<rect x="173" y="344" width="1" height="6" fill="#28fa00"/>
<rect x="174" y="344" width="1" height="6" fill="#28fa00"/>
<rect x="175" y="338" width="1" height="12" fill="#28fa00"/>
<rect x="176" y="344" width="1" height="6" fill="#28fa00"/>
<rect x="177" y="344" width="1" height="6" fill="#28fa00"/>
<rect x="178" y="347" width="1" height="3" fill="#28fa00"/>
<rect x="179" y="347" width="1" height="3" fill="#28fa00"/>
<rect x="180" y="347" width="1" height="3" fill="#28fa00"/>
<rect x="181" y="347" width="1" height="3" fill="#28fa00"/>
<rect x="182" y="347" width="1" height="3" fill="#28fa00"/>
<rect x="183" y="347" width="1" height="3" fill="#28fa00"/>
<rect x="184" y="344" width="1" height="6" fill="#28fa00"/>
<rect x="185" y="344" width="1" height="6" fill="#28fa00"/>
<rect x="186" y="344" width="1" height="6" fill="#28fa00"/>
<rect x="187" y="344" width="1" height="6" fill="#28fa00"/>
<rect x="190" y="347" width="1" height="3" fill="#28fa00"/>
<rect x="191" y="338" width="1" height="12" fill="#28fa00"/>
<rect x="192" y="344" width="1" height="6" fill="#28fa00"/>
<rect x="193" y="344" width="1" height="6" fill="#28fa00"/>
<rect x="197" y="341" width="1" height="9" fill="#28fa00"/>
<rect x="198" y="347" width="1" height="3" fill="#28fa00"/>
<rect x="199" y="347" width="1" height="3" fill="#28fa00"/>
<rect x="200" y="341" width="1" height="9" fill="#28fa00"/>
<rect x="201" y="347" width="1" height="3" fill="#28fa00"/>
<rect x="205" y="347" width="1" height="3" fill="#28fa00"/>
<rect x="206" y="347" width="1" height="3" fill="#28fa00"/>
<rect x="207" y="347" width="1" height="3" fill="#28fa00"/>
<rect x="208" y="344" width="1" height="6" fill="#28fa00"/>
<rect x="209" y="345" width="1" height="5" fill="#98aa80"/>
<rect x="209" y="344" width="1" height="6" fill="#28fa00"/>
<rect x="210" y="339" width="1" height="11" fill="#98aa80"/>
<rect x="210" y="344" width="1" height="6" fill="#28fa00"/>
<rect x="211" y="334" width="1" height="16" fill="#98aa80"/>
<rect x="211" y="344" width="1" height="6" fill="#28fa00"/>
<rect x="212" y="329" width="1" height="21" fill="#98aa80"/>
<rect x="212" y="344" width="1" height="6" fill="#28fa00"/>
<rect x="213" y="318" width="1" height="32" fill="#98aa80"/>
<rect x="213" y="344" width="1" height="6" fill="#28fa00"/>
<rect x="214" y="324" width="1" height="26" fill="#98aa80"/>
<rect x="214" y="344" width="1" height="6" fill="#28fa00"/>
<rect x="215" y="329" width="1" height="21" fill="#98aa80"/>
<rect x="215" y="347" width="1" height="3" fill="#28fa00"/>
<rect x="216" y="337" width="1" height="13" fill="#98aa80"/>
<rect x="216" y="347" width="1" height="3" fill="#28fa00"/>
<rect x="217" y="342" width="1" height="8" fill="#98aa80"/>
<rect x="217" y="347" width="1" height="3" fill="#28fa00"/>
<rect x="220" y="347" width="1" height="3" fill="#28fa00"/>
<rect x="221" y="344" width="1" height="6" fill="#28fa00"/>
<rect x="222" y="338" width="1" height="12" fill="#28fa00"/>
<rect x="226" y="344" width="1" height="6" fill="#28fa00"/>
<rect x="227" y="344" width="1" height="6" fill="#28fa00"/>
<rect x="228" y="344" width="1" height="6" fill="#28fa00"/>
<rect x="229" y="344" width="1" height="6" fill="#28fa00"/>
<rect x="230" y="338" width="1" height="12" fill="#28fa00"/>
<rect x="231" y="344" width="1" height="6" fill="#28fa00"/>
<rect x="232" y="344" width="1" height="6" fill="#28fa00"/>
<rect x="237" y="344" width="1" height="6" fill="#28fa00"/>
<rect x="238" y="347" width="1" height="3" fill="#28fa00"/>
<rect x="239" y="347" width="1" height="3" fill="#28fa00"/>
<rect x="240" y="344" width="1" height="6" fill="#28fa00"/>
<rect x="242" y="347" width="1" height="3" fill="#28fa00"/>
<rect x="243" y="344" width="1" height="6" fill="#28fa00"/>
<rect x="244" y="344" width="1" height="6" fill="#28fa00"/>
<rect x="247" y="344" width="1" height="6" fill="#28fa00"/>
<rect x="248" y="344" width="1" height="6" fill="#28fa00"/>
<rect x="249" y="344" width="1" height="6" fill="#28fa00"/>
<rect x="250" y="344" width="1" height="6" fill="#28fa00"/>
<rect x="251" y="344" width="1" height="6" fill="#28fa00"/>
<rect x="252" y="344" width="1" height="6" fill="#28fa00"/>
<rect x="253" y="344" width="1" height="6" fill="#28fa00"/>
<rect x="254" y="344" width="1" height="6" fill="#28fa00"/>
<rect x="255" y="344" width="1" height="6" fill="#28fa00"/>
<rect x="256" y="347" width="1" height="3" fill="#28fa00"/>
<rect x="257" y="347" width="1" height="3" fill="#28fa00"/>
<rect x="258" y="347" width="1" height="3" fill="#28fa00"/>
<rect x="260" y="347" width="1" height="3" fill="#28fa00"/>
<rect x="261" y="344" width="1" height="6" fill="#28fa00"/>
<rect x="262" y="344" width="1" height="6" fill="#28fa00"/>
<rect x="263" y="347" width="1" height="3" fill="#28fa00"/>
<rect x="264" y="347" width="1" height="3" fill="#28fa00"/>
<rect x="265" y="344" width="1" height="6" fill="#28fa00"/>
<rect x="266" y="344" width="1" height="6" fill="#28fa00"/>
<rect x="267" y="344" width="1" height="6" fill="#28fa00"/>
<rect x="268" y="344" width="1" height="6" fill="#28fa00"/>
<rect x="269" y="344" width="1" height="6" fill="#28fa00"/>
<rect x="270" y="337" width="1" height="13" fill="#98aa80"/>
<rect x="270" y="344" width="1" height="6" fill="#28fa00"/>
<rect x="271" y="344" width="1" height="6" fill="#28fa00"/>
<rect x="272" y="341" width="1" height="9" fill="#28fa00"/>
<rect x="274" y="347" width="1" height="3" fill="#28fa00"/>
<rect x="275" y="344" width="1" height="6" fill="#28fa00"/>
<rect x="276" y="344" width="1" height="6" fill="#28fa00"/>
<rect x="277" y="334" width="1" height="16" fill="#98aa80"/>
<rect x="277" y="344" width="1" height="6" fill="#28fa00"/>
<rect x="279" y="344" width="1" height="6" fill="#28fa00"/>
<rect x="280" y="344" width="1" height="6" fill="#28fa00"/>
<rect x="281" y="344" width="1" height="6" fill="#28fa00"/>
<rect x="282" y="338" width="1" height="12" fill="#28fa00"/>
<rect x="283" y="344" width="1" height="6" fill="#28fa00"/>
<rect x="284" y="344" width="1" height="6" fill="#28fa00"/>
<rect x="285" y="344" width="1" height="6" fill="#28fa00"/>
<rect x="286" y="344" width="1" height="6" fill="#28fa00"/>
<rect x="287" y="344" width="1" height="6" fill="#28fa00"/>
<rect x="288" y="344" width="1" height="6" fill="#28fa00"/>
<rect x="289" y="347" width="1" height="3" fill="#28fa00"/>
<rect x="290" y="347" width="1" height="3" fill="#28fa00"/>
<rect x="291" y="341" width="1" height="9" fill="#28fa00"/>
<rect x="292" y="341" width="1" height="9" fill="#28fa00"/>
<rect x="293" y="344" width="1" height="6" fill="#28fa00"/>
<rect x="294" y="344" width="1" height="6" fill="#28fa00"/>
<rect x="295" y="344" width="1" height="6" fill="#28fa00"/>
<rect x="296" y="344" width="1" height="6" fill="#28fa00"/>
<rect x="297" y="344" width="1" height="6" fill="#28fa00"/>
<rect x="298" y="344" width="1" height="6" fill="#28fa00"/>
<rect x="299" y="337" width="1" height="13" fill="#98aa80"/>
<rect x="299" y="344" width="1" height="6" fill="#28fa00"/>
<rect x="300" y="347" width="1" height="3" fill="#28fa00"/>
<rect x="301" y="341" width="1" height="9" fill="#28fa00"/>
<rect x="302" y="344" width="1" height="6" fill="#28fa00"/>
<rect x="303" y="344" width="1" height="6" fill="#28fa00"/>
<rect x="304" y="344" width="1" height="6" fill="#28fa00"/>
<rect x="305" y="338" width="1" height="12" fill="#28fa00"/>
<rect x="306" y="344" width="1" height="6" fill="#28fa00"/>
<rect x="307" y="344" width="1" height="6" fill="#28fa00"/>
<rect x="308" y="344" width="1" height="6" fill="#28fa00"/>
<rect x="309" y="344" width="1" height="6" fill="#28fa00"/>
<rect x="310" y="344" width="1" height="6" fill="#28fa00"/>
<rect x="311" y="344" width="1" height="6" fill="#28fa00"/>
<rect x="314" y="344" width="1" height="6" fill="#28fa00"/>
<rect x="315" y="344" width="1" height="6" fill="#28fa00"/>
<rect x="316" y="347" width="1" height="3" fill="#28fa00"/>
<rect x="317" y="344" width="1" height="6" fill="#28fa00"/>
<rect x="318" y="344" width="1" height="6" fill="#28fa00"/>
<rect x="319" y="344" width="1" height="6" fill="#28fa00"/>
<rect x="320" y="344" width="1" height="6" fill="#28fa00"/>
<rect x="321" y="344" width="1" height="6" fill="#28fa00"/>
<rect x="322" y="344" width="1" height="6" fill="#28fa00"/>
<rect x="323" y="347" width="1" height="3" fill="#28fa00"/>
<rect x="324" y="347" width="1" height="3" fill="#28fa00"/>
<rect x="325" y="347" width="1" height="3" fill="#28fa00"/>
<rect x="326" y="338" width="1" height="12" fill="#28fa00"/>
<rect x="327" y="344" width="1" height="6" fill="#28fa00"/>
<rect x="328" y="338" width="1" height="12" fill="#28fa00"/>
<rect x="329" y="344" width="1" height="6" fill="#28fa00"/>
<rect x="330" y="344" width="1" height="6" fill="#28fa00"/>
<rect x="331" y="344" width="1" height="6" fill="#28fa00"/>
<rect x="332" y="344" width="1" height="6" fill="#28fa00"/>
<rect x="333" y="341" width="1" height="9" fill="#28fa00"/>
<rect x="334" y="341" width="1" height="9" fill="#28fa00"/>
<rect x="335" y="347" width="1" height="3" fill="#28fa00"/>
<rect x="336" y="347" width="1" height="3" fill="#28fa00"/>
<rect x="337" y="344" width="1" height="6" fill="#28fa00"/>
<rect x="338" y="344" width="1" height="6" fill="#28fa00"/>
<rect x="339" y="344" width="1" height="6" fill="#28fa00"/>
<rect x="340" y="341" width="1" height="9" fill="#28fa00"/>
<rect x="341" y="344" width="1" height="6" fill="#28fa00"/>
<rect x="342" y="344" width="1" height="6" fill="#28fa00"/>
<rect x="343" y="344" width="1" height="6" fill="#28fa00"/>
<rect x="344" y="341" width="1" height="9" fill="#28fa00"/>
<rect x="345" y="344" width="1" height="6" fill="#28fa00"/>
<rect x="346" y="344" width="1" height="6" fill="#28fa00"/>
<rect x="347" y="347" width="1" height="3" fill="#28fa00"/>
<rect x="348" y="347" width="1" height="3" fill="#28fa00"/>
<rect x="349" y="337" width="1" height="13" fill="#98aa80"/>
<rect x="349" y="344" width="1" height="6" fill="#28fa00"/>
<rect x="350" y="344" width="1" height="6" fill="#28fa00"/>
<rect x="351" y="344" width="1" height="6" fill="#28fa00"/>
<rect x="352" y="344" width="1" height="6" fill="#28fa00"/>
<rect x="355" y="341" width="1" height="9" fill="#28fa00"/>
<rect x="356" y="344" width="1" height="6" fill="#28fa00"/>
<rect x="357" y="344" width="1" height="6" fill="#28fa00"/>
<rect x="358" y="341" width="1" height="9" fill="#28fa00"/>
<rect x="359" y="338" width="1" height="12" fill="#28fa00"/>
<rect x="360" y="344" width="1" height="6" fill="#28fa00"/>
<rect x="361" y="344" width="1" height="6" fill="#28fa00"/>
<rect x="362" y="344" width="1" height="6" fill="#28fa00"/>
<rect x="363" y="347" width="1" height="3" fill="#28fa00"/>
<rect x="364" y="347" width="1" height="3" fill="#28fa00"/>
<rect x="365" y="347" width="1" height="3" fill="#28fa00"/>
<rect x="366" y="347" width="1" height="3" fill="#28fa00"/>
<rect x="367" y="331" width="1" height="19" fill="#98aa80"/>
<rect x="367" y="347" width="1" height="3" fill="#28fa00"/>
<rect x="368" y="334" width="1" height="16" fill="#98aa80"/>
<rect x="368" y="344" width="1" height="6" fill="#28fa00"/>
<rect x="369" y="329" width="1" height="21" fill="#98aa80"/>
<rect x="369" y="344" width="1" height="6" fill="#28fa00"/>
<rect x="371" y="337" width="1" height="13" fill="#98aa80"/>
<rect x="371" y="344" width="1" height="6" fill="#28fa00"/>
<rect x="372" y="344" width="1" height="6" fill="#28fa00"/>
<rect x="373" y="344" width="1" height="6" fill="#28fa00"/>
<rect x="374" y="344" width="1" height="6" fill="#28fa00"/>
<rect x="375" y="344" width="1" height="6" fill="#28fa00"/>
<rect x="376" y="334" width="1" height="16" fill="#98aa80"/>
<rect x="376" y="341" width="1" height="9" fill="#28fa00"/>
<rect x="377" y="334" width="1" height="16" fill="#98aa80"/>
<rect x="377" y="344" width="1" height="6" fill="#28fa00"/>
<rect x="378" y="344" width="1" height="6" fill="#28fa00"/>
<rect x="379" y="347" width="1" height="3" fill="#28fa00"/>
<rect x="380" y="347" width="1" height="3" fill="#28fa00"/>
<rect x="381" y="347" width="1" height="3" fill="#28fa00"/>
<rect x="382" y="341" width="1" height="9" fill="#28fa00"/>
<rect x="383" y="344" width="1" height="6" fill="#28fa00"/>
<rect x="384" y="344" width="1" height="6" fill="#28fa00"/>
<rect x="385" y="344" width="1" height="6" fill="#28fa00"/>
<rect x="386" y="344" width="1" height="6" fill="#28fa00"/>
<rect x="388" y="337" width="1" height="13" fill="#98aa80"/>
<rect x="389" y="344" width="1" height="6" fill="#28fa00"/>
<rect x="390" y="344" width="1" height="6" fill="#28fa00"/>
<rect x="391" y="344" width="1" height="6" fill="#28fa00"/>
<rect x="393" y="329" width="1" height="21" fill="#98aa80"/>
<rect x="393" y="344" width="1" height="6" fill="#28fa00"/>
<rect x="394" y="344" width="1" height="6" fill="#28fa00"/>
<rect x="395" y="344" width="1" height="6" fill="#28fa00"/>
<rect x="396" y="344" width="1" height="6" fill="#28fa00"/>
<rect x="397" y="344" width="1" height="6" fill="#28fa00"/>
<rect x="398" y="341" width="1" height="9" fill="#28fa00"/>
<rect x="399" y="347" width="1" height="3" fill="#28fa00"/>
<rect x="400" y="337" width="1" height="13" fill="#98aa80"/>
<rect x="400" y="347" width="1" height="3" fill="#28fa00"/>
<rect x="401" y="341" width="1" height="9" fill="#28fa00"/>
<rect x="402" y="337" width="1" height="13" fill="#98aa80"/>
<rect x="402" y="344" width="1" height="6" fill="#28fa00"/>
<rect x="403" y="341" width="1" height="9" fill="#28fa00"/>
<rect x="404" y="341" width="1" height="9" fill="#28fa00"/>
<rect x="405" y="341" width="1" height="9" fill="#28fa00"/>
<rect x="406" y="341" width="1" height="9" fill="#28fa00"/>
<rect x="407" y="338" width="1" height="12" fill="#28fa00"/>
<rect x="408" y="339" width="1" height="11" fill="#98aa80"/>
<rect x="408" y="347" width="1" height="3" fill="#28fa00"/>
<rect x="409" y="347" width="1" height="3" fill="#28fa00"/>
<rect x="410" y="347" width="1" height="3" fill="#28fa00"/>
<rect x="411" y="341" width="1" height="9" fill="#28fa00"/>
<rect x="412" y="341" width="1" height="9" fill="#28fa00"/>
<rect x="413" y="344" width="1" height="6" fill="#28fa00"/>
<rect x="414" y="341" width="1" height="9" fill="#28fa00"/>
<rect x="415" y="337" width="1" height="13" fill="#98aa80"/>
<rect x="415" y="341" width="1" height="9" fill="#28fa00"/>
<rect x="416" y="337" width="1" height="13" fill="#98aa80"/>
<rect x="416" y="341" width="1" height="9" fill="#28fa00"/>
<rect x="417" y="341" width="1" height="9" fill="#28fa00"/>
<rect x="418" y="337" width="1" height="13" fill="#98aa80"/>
<rect x="418" y="341" width="1" height="9" fill="#28fa00"/>
<rect x="419" y="341" width="1" height="9" fill="#28fa00"/>
<rect x="420" y="341" width="1" height="9" fill="#28fa00"/>
<rect x="421" y="341" width="1" height="9" fill="#28fa00"/>
<rect x="422" y="341" width="1" height="9" fill="#28fa00"/>
<rect x="423" y="341" width="1" height="9" fill="#28fa00"/>
<rect x="424" y="341" width="1" height="9" fill="#28fa00"/>
<rect x="425" y="341" width="1" height="9" fill="#28fa00"/>
<rect x="426" y="341" width="1" height="9" fill="#28fa00"/>
<rect x="427" y="341" width="1" height="9" fill="#28fa00"/>
<rect x="428" y="341" width="1" height="9" fill="#28fa00"/>
<rect x="429" y="339" width="1" height="11" fill="#98aa80"/>
<rect x="429" y="341" width="1" height="9" fill="#28fa00"/>
<rect x="430" y="337" width="1" height="13" fill="#98aa80"/>
<rect x="430" y="341" width="1" height="9" fill="#28fa00"/>
<rect x="431" y="344" width="1" height="6" fill="#28fa00"/>
<rect x="432" y="337" width="1" height="13" fill="#98aa80"/>
<rect x="432" y="344" width="1" height="6" fill="#28fa00"/>
<rect x="433" y="344" width="1" height="6" fill="#28fa00"/>
<rect x="434" y="341" width="1" height="9" fill="#28fa00"/>
<rect x="435" y="341" width="1" height="9" fill="#28fa00"/>
<rect x="436" y="347" width="1" height="3" fill="#28fa00"/>
<rect x="437" y="341" width="1" height="9" fill="#28fa00"/>
<rect x="438" y="334" width="1" height="16" fill="#98aa80"/>
<rect x="438" y="341" width="1" height="9" fill="#28fa00"/>
<rect x="439" y="341" width="1" height="9" fill="#28fa00"/>
<rect x="440" y="344" width="1" height="6" fill="#28fa00"/>
<rect x="441" y="344" width="1" height="6" fill="#28fa00"/>
<rect x="442" y="344" width="1" height="6" fill="#28fa00"/>
<rect x="443" y="334" width="1" height="16" fill="#98aa80"/>
<rect x="443" y="344" width="1" height="6" fill="#28fa00"/>
<rect x="444" y="344" width="1" height="6" fill="#28fa00"/>
<rect x="445" y="344" width="1" height="6" fill="#28fa00"/>
<rect x="446" y="341" width="1" height="9" fill="#28fa00"/>
<rect x="447" y="341" width="1" height="9" fill="#28fa00"/>
<rect x="448" y="337" width="1" height="13" fill="#98aa80"/>
<rect x="448" y="341" width="1" height="9" fill="#28fa00"/>
<rect x="449" y="334" width="1" height="16" fill="#98aa80"/>
<rect x="449" y="344" width="1" height="6" fill="#28fa00"/>
<rect x="450" y="344" width="1" height="6" fill="#28fa00"/>
<rect x="451" y="344" width="1" height="6" fill="#28fa00"/>
<rect x="452" y="344" width="1" height="6" fill="#28fa00"/>
<rect x="453" y="344" width="1" height="6" fill="#28fa00"/>
<rect x="454" y="341" width="1" height="9" fill="#28fa00"/>
<rect x="455" y="341" width="1" height="9" fill="#28fa00"/>
<rect x="456" y="334" width="1" height="16" fill="#98aa80"/>
<rect x="456" y="344" width="1" height="6" fill="#28fa00"/>
<rect x="457" y="337" width="1" height="13" fill="#98aa80"/>
<rect x="457" y="341" width="1" height="9" fill="#28fa00"/>
<rect x="458" y="334" width="1" height="16" fill="#98aa80"/>
<rect x="458" y="341" width="1" height="9" fill="#28fa00"/>
<rect x="459" y="341" width="1" height="9" fill="#28fa00"/>
<rect x="460" y="341" width="1" height="9" fill="#28fa00"/>
<rect x="461" y="334" width="1" height="16" fill="#98aa80"/>
<rect x="461" y="341" width="1" height="9" fill="#28fa00"/>
<rect x="462" y="341" width="1" height="9" fill="#28fa00"/>
<rect x="463" y="341" width="1" height="9" fill="#28fa00"/>
<rect x="464" y="337" width="1" height="13" fill="#98aa80"/>
<rect x="464" y="341" width="1" height="9" fill="#28fa00"/>
<rect x="465" y="339" width="1" height="11" fill="#98aa80"/>
<rect x="465" y="341" width="1" height="9" fill="#28fa00"/>
<rect x="466" y="337" width="1" height="13" fill="#98aa80"/>
<rect x="466" y="338" width="1" height="12" fill="#28fa00"/>
<rect x="467" y="337" width="1" height="13" fill="#98aa80"/>
<rect x="467" y="338" width="1" height="12" fill="#28fa00"/>
<rect x="468" y="341" width="1" height="9" fill="#28fa00"/>
<rect x="469" y="341" width="1" height="9" fill="#28fa00"/>
<rect x="470" y="334" width="1" height="16" fill="#98aa80"/>
<rect x="470" y="344" width="1" height="6" fill="#28fa00"/>
<rect x="471" y="344" width="1" height="6" fill="#28fa00"/>
<rect x="472" y="337" width="1" height="13" fill="#98aa80"/>
<rect x="472" y="341" width="1" height="9" fill="#28fa00"/>
<rect x="473" y="334" width="1" height="16" fill="#98aa80"/>
<rect x="474" y="331" width="1" height="19" fill="#98aa80"/>
<rect x="475" y="329" width="1" height="21" fill="#98aa80"/>
<rect x="475" y="344" width="1" height="6" fill="#28fa00"/>
<rect x="476" y="324" width="1" height="26" fill="#98aa80"/>
<rect x="476" y="341" width="1" height="9" fill="#28fa00"/>
<rect x="477" y="329" width="1" height="21" fill="#98aa80"/>
<rect x="477" y="341" width="1" height="9" fill="#28fa00"/>
<rect x="478" y="334" width="1" height="16" fill="#98aa80"/>
<rect x="479" y="329" width="1" height="21" fill="#98aa80"/>
<rect x="479" y="344" width="1" height="6" fill="#28fa00"/>
<rect x="480" y="334" width="1" height="16" fill="#98aa80"/>
<rect x="480" y="341" width="1" height="9" fill="#28fa00"/>
<rect x="481" y="331" width="1" height="19" fill="#98aa80"/>
<rect x="481" y="341" width="1" height="9" fill="#28fa00"/>
<rect x="482" y="324" width="1" height="26" fill="#98aa80"/>
<rect x="483" y="331" width="1" height="19" fill="#98aa80"/>
<rect x="483" y="344" width="1" height="6" fill="#28fa00"/>
<rect x="484" y="326" width="1" height="24" fill="#98aa80"/>
<rect x="484" y="344" width="1" height="6" fill="#28fa00"/>
<rect x="485" y="331" width="1" height="19" fill="#98aa80"/>
<rect x="485" y="341" width="1" height="9" fill="#28fa00"/>
<rect x="486" y="331" width="1" height="19" fill="#98aa80"/>
<rect x="487" y="324" width="1" height="26" fill="#98aa80"/>
<rect x="488" y="337" width="1" height="13" fill="#98aa80"/>
<rect x="488" y="341" width="1" height="9" fill="#28fa00"/>
<rect x="489" y="334" width="1" height="16" fill="#98aa80"/>
<rect x="489" y="341" width="1" height="9" fill="#28fa00"/>
<rect x="490" y="324" width="1" height="26" fill="#98aa80"/>
<rect x="490" y="341" width="1" height="9" fill="#28fa00"/>
<rect x="491" y="329" width="1" height="21" fill="#98aa80"/>
<rect x="491" y="341" width="1" height="9" fill="#28fa00"/>
<rect x="492" y="326" width="1" height="24" fill="#98aa80"/>
<rect x="493" y="331" width="1" height="19" fill="#98aa80"/>
<rect x="494" y="334" width="1" height="16" fill="#98aa80"/>
<rect x="494" y="341" width="1" height="9" fill="#28fa00"/>
<rect x="495" y="337" width="1" height="13" fill="#98aa80"/>
<rect x="495" y="338" width="1" height="12" fill="#28fa00"/>
<rect x="496" y="334" width="1" height="16" fill="#98aa80"/>
<rect x="496" y="341" width="1" height="9" fill="#28fa00"/>
<rect x="497" y="329" width="1" height="21" fill="#98aa80"/>
<rect x="498" y="337" width="1" height="13" fill="#98aa80"/>
<rect x="498" y="341" width="1" height="9" fill="#28fa00"/>
<rect x="499" y="337" width="1" height="13" fill="#98aa80"/>
<rect x="500" y="339" width="1" height="11" fill="#98aa80"/>
<rect x="500" y="344" width="1" height="6" fill="#28fa00"/>
<rect x="501" y="339" width="1" height="11" fill="#98aa80"/>
<rect x="502" y="337" width="1" height="13" fill="#98aa80"/>
<rect x="503" y="337" width="1" height="13" fill="#98aa80"/>
<rect x="504" y="334" width="1" height="16" fill="#98aa80"/>
<rect x="504" y="338" width="1" height="12" fill="#28fa00"/>
<rect x="505" y="331" width="1" height="19" fill="#98aa80"/>
<rect x="505" y="341" width="1" height="9" fill="#28fa00"/>
<rect x="506" y="334" width="1" height="16" fill="#98aa80"/>
<rect x="506" y="338" width="1" height="12" fill="#28fa00"/>
<rect x="507" y="334" width="1" height="16" fill="#98aa80"/>
<rect x="507" y="338" width="1" height="12" fill="#28fa00"/>
<rect x="508" y="334" width="1" height="16" fill="#98aa80"/>
<rect x="508" y="341" width="1" height="9" fill="#28fa00"/>
<rect x="509" y="313" width="1" height="37" fill="#98aa80"/>
<rect x="509" y="341" width="1" height="9" fill="#28fa00"/>
<rect x="510" y="318" width="1" height="32" fill="#98aa80"/>
<rect x="510" y="344" width="1" height="6" fill="#28fa00"/>
<rect x="511" y="324" width="1" height="26" fill="#98aa80"/>
<rect x="512" y="321" width="1" height="29" fill="#98aa80"/>
<rect x="512" y="338" width="1" height="12" fill="#28fa00"/>
<rect x="513" y="318" width="1" height="32" fill="#98aa80"/>
<rect x="513" y="341" width="1" height="9" fill="#28fa00"/>
<rect x="514" y="326" width="1" height="24" fill="#98aa80"/>
<rect x="515" y="331" width="1" height="19" fill="#98aa80"/>
<rect x="515" y="338" width="1" height="12" fill="#28fa00"/>
<rect x="516" y="341" width="1" height="9" fill="#28fa00"/>
</g>
<rect x="62" y="186" width="5" height="1" fill="#ff0000"/>
<rect x="67" y="185" width="14" height="1" fill="#ff0000"/>
<rect x="67" y="185" width="1" height="2" fill="#ff0000"/>
<rect x="81" y="184" width="15" height="1" fill="#ff0000"/>
<rect x="81" y="184" width="1" height="2" fill="#ff0000"/>
<rect x="96" y="183" width="14" height="1" fill="#ff0000"/>
<rect x="96" y="183" width="1" height="2" fill="#ff0000"/>
<rect x="110" y="182" width="14" height="1" fill="#ff0000"/>
<rect x="110" y="182" width="1" height="2" fill="#ff0000"/>
<rect x="124" y="181" width="14" height="1" fill="#ff0000"/>
<rect x="124" y="181" width="1" height="2" fill="#ff0000"/>
<rect x="138" y="180" width="23" height="1" fill="#ff0000"/>
<rect x="138" y="180" width="1" height="2" fill="#ff0000"/>
<rect x="161" y="179" width="25" height="1" fill="#ff0000"/>
<rect x="161" y="179" width="1" height="2" fill="#ff0000"/>
<rect x="186" y="178" width="21" height="1" fill="#ff0000"/>
<rect x="186" y="178" width="1" height="2" fill="#ff0000"/>
<rect x="207" y="177" width="21" height="1" fill="#ff0000"/>
<rect x="207" y="177" width="1" height="2" fill="#ff0000"/>
<rect x="228" y="176" width="20" height="1" fill="#ff0000"/>
<rect x="228" y="176" width="1" height="2" fill="#ff0000"/>
<rect x="248" y="175" width="23" height="1" fill="#ff0000"/>
<rect x="248" y="175" width="1" height="2" fill="#ff0000"/>
<rect x="271" y="174" width="24" height="1" fill="#ff0000"/>
<rect x="271" y="174" width="1" height="2" fill="#ff0000"/>
<rect x="295" y="173" width="25" height="1" fill="#ff0000"/>
<rect x="295" y="173" width="1" height="2" fill="#ff0000"/>
<rect x="320" y="172" width="27" height="1" fill="#ff0000"/>
<rect x="320" y="172" width="1" height="2" fill="#ff0000"/>
<rect x="347" y="171" width="29" height="1" fill="#ff0000"/>
<rect x="347" y="171" width="1" height="2" fill="#ff0000"/>
<rect x="376" y="170" width="29" height="1" fill="#ff0000"/>
<rect x="376" y="170" width="1" height="2" fill="#ff0000"/>
<rect x="405" y="169" width="31" height="1" fill="#ff0000"/>
<rect x="405" y="169" width="1" height="2" fill="#ff0000"/>
<rect x="436" y="168" width="31" height="1" fill="#ff0000"/>
<rect x="436" y="168" width="1" height="2" fill="#ff0000"/>
<rect x="467" y="167" width="33" height="1" fill="#ff0000"/>
<rect x="467" y="167" width="1" height="2" fill="#ff0000"/>
<rect x="500" y="166" width="16" height="1" fill="#ff0000"/>
<rect x="500" y="166" width="1" height="2" fill="#ff0000"/>
<polyline fill="none" stroke="#fff" stroke-width="1.2" shape-rendering="auto" points="62.5,153.5 63.5,153.1 64.5,152.7 65.5,152.2 66.5,146.5 67.5,146.2 68.5,146.0 69.5,145.7 70.5,145.4 71.5,145.2 72.5,144.9 73.5,146.7 74.5,148.9 75.5,149.8 76.5,147.2 77.5,144.4 78.5,143.3 79.5,143.1 80.5,142.8 81.5,142.5 82.5,142.3 83.5,143.6 84.5,148.6 85.5,153.9 86.5,151.7 87.5,146.0 88.5,140.7 89.5,140.4 90.5,140.1 91.5,139.9 92.5,139.6 93.5,139.4 94.5,139.1 95.5,138.8 96.5,143.4 97.5,148.7 98.5,150.8 99.5,145.1 100.5,139.2 101.5,137.5 102.5,137.5 103.5,137.5 104.5,137.5 105.5,137.5 106.5,137.5 107.5,137.5 108.5,139.3 109.5,145.5 110.5,151.7 111.5,149.2 112.5,143.0 113.5,137.5 114.5,137.5 115.5,137.5 116.5,137.5 117.5,137.5 118.5,137.5 119.5,137.5 120.5,137.5 121.5,137.5 122.5,137.5 123.5,137.5 124.5,137.5 125.5,137.5 126.5,137.5 127.5,137.5 128.5,137.5 129.5,137.5 130.5,137.5 131.5,139.3 132.5,145.5 133.5,151.7 134.5,149.2 135.5,143.0 136.5,137.5 137.5,137.5 138.5,137.5 139.5,137.5 140.5,137.5 141.5,137.5 142.5,137.5 143.5,137.5 144.5,137.5 145.5,137.5 146.5,137.5 147.5,137.5 148.5,137.5 149.5,137.5 150.5,137.5 151.5,137.5 152.5,137.5 153.5,137.5 154.5,137.5 155.5,137.5 156.5,137.5 157.5,137.5 158.5,137.5 159.5,138.7 160.5,144.4 161.5,150.2 162.5,149.0 163.5,143.3 164.5,137.5 165.5,137.5 166.5,137.5 167.5,137.5 168.5,137.5 169.5,137.5 170.5,137.5 171.5,137.5 172.5,137.5 173.5,137.5 174.5,137.5 175.5,137.5 176.5,137.5 177.5,137.5 178.5,137.5 179.5,137.5 180.5,137.5 181.5,137.5 182.5,137.5 183.5,137.5 184.5,139.0 185.5,146.3 186.5,153.6 187.5,152.1 188.5,144.8 189.5,137.5 190.5,137.5 191.5,137.5 192.5,137.5 193.5,137.5 194.5,137.5 195.5,137.5 196.5,137.5 197.5,137.5 198.5,137.5 199.5,137.5 200.5,137.5 201.5,137.5 202.5,137.5 203.5,137.5 204.5,137.5 205.5,137.5 206.5,137.5 207.5,137.5 208.5,137.5 209.5,137.5 210.5,137.5 211.5,137.5 212.5,137.5 213.5,139.9 214.5,146.0 215.5,152.0 216.5,148.4 217.5,142.3 218.5,137.5 219.5,137.5 220.5,137.5 221.5,137.5 222.5,137.5 223.5,137.5 224.5,137.5 225.5,137.5 226.5,137.5 227.5,137.5 228.5,137.5 229.5,137.5 230.5,137.5 231.5,137.5 232.5,137.5 233.5,137.5 234.5,137.5 235.5,137.5 236.5,137.5 237.5,137.5 238.5,137.5 239.5,137.5 240.5,137.5 241.5,137.5 242.5,137.5 243.5,137.5 244.5,137.5 245.5,137.5 246.5,137.5 247.5,137.5 248.5,145.2 249.5,152.9 250.5,154.4 251.5,146.7 252.5,139.0 253.5,137.5 254.5,137.5 255.5,137.5 256.5,137.5 257.5,137.5 258.5,137.5 259.5,137.5 260.5,137.5 261.5,137.5 262.5,137.5 263.5,137.5 264.5,137.5 265.5,137.5 266.5,137.5 267.5,137.5 268.5,137.5 269.5,137.5 270.5,137.5 271.5,137.5 272.5,137.5 273.5,137.5 274.5,137.5 275.5,137.5 276.5,137.5 277.5,137.5 278.5,137.5 279.5,137.5 280.5,137.5 281.5,137.5 282.5,137.5 283.5,142.3 284.5,148.4 285.5,152.0 286.5,146.0 287.5,139.9 288.5,137.5 289.5,137.5 290.5,137.5 291.5,137.5 292.5,137.5 293.5,137.5 294.5,137.5 295.5,137.5 296.5,137.5 297.5,137.5 298.5,137.5 299.5,137.5 300.5,137.5 301.5,137.5 302.5,137.5 303.5,137.5 304.5,137.5 305.5,137.5 306.5,137.5 307.5,137.5 308.5,137.5 309.5,137.5 310.5,137.5 311.5,137.5 312.5,137.5 313.5,137.5 314.5,137.5 315.5,137.5 316.5,141.0 317.5,146.7 318.5,152.5 319.5,146.7 320.5,141.0 321.5,137.5 322.5,137.5 323.5,137.5 324.5,137.5 325.5,137.5 326.5,137.5 327.5,137.5 328.5,137.5 329.5,137.5 330.5,137.5 331.5,137.5 332.5,137.5 333.5,137.5 334.5,137.5 335.5,137.5 336.5,137.5 337.5,137.5 338.5,137.5 339.5,137.5 340.5,137.5 341.5,137.5 342.5,137.5 343.5,137.5 344.5,137.5 345.5,137.5 346.5,137.5 347.5,137.5 348.5,137.5 349.5,137.5 350.5,137.5 351.5,137.5 352.5,137.5 353.5,137.5 354.5,137.5 355.5,137.5 356.5,137.5 357.5,137.5 358.5,137.5 359.5,137.5 360.5,141.2 361.5,147.3 362.5,153.5 363.5,147.3 364.5,141.2 365.5,137.5 366.5,137.5 367.5,137.5 368.5,137.5 369.5,137.5 370.5,137.5 371.5,137.5 372.5,137.5 373.5,137.5 374.5,137.5 375.5,137.5 376.5,137.5 377.5,137.5 378.5,137.5 379.5,137.5 380.5,137.5 381.5,137.5 382.5,137.5 383.5,137.5 384.5,137.5 385.5,137.5 386.5,137.5 387.5,137.5 388.5,137.5 389.5,137.5 390.5,137.5 391.5,137.5 392.5,137.5 393.5,137.5 394.5,137.5 395.5,137.5 396.5,137.5 397.5,137.5 398.5,137.5 399.5,142.1 400.5,149.8 401.5,157.5 402.5,149.8 403.5,142.1 404.5,137.5 405.5,137.5 406.5,137.5 407.5,137.5 408.5,137.5 409.5,137.5 410.5,137.5 411.5,137.5 412.5,137.5 413.5,137.5 414.5,137.5 415.5,137.5 416.5,137.5 417.5,137.5 418.5,137.5 419.5,137.5 420.5,137.5 421.5,137.5 422.5,137.5 423.5,137.5 424.5,137.5 425.5,137.5 426.5,137.5 427.5,137.5 428.5,137.5 429.5,137.5 430.5,137.5 431.5,137.5 432.5,137.5 433.5,137.5 434.5,137.5 435.5,137.5 436.5,137.5 437.5,137.5 438.5,137.5 439.5,137.5 440.5,138.1 441.5,144.3 442.5,150.4 443.5,150.4 444.5,144.3 445.5,138.1 446.5,137.5 447.5,137.5 448.5,137.5 449.5,137.5 450.5,137.5 451.5,137.5 452.5,137.5 453.5,137.5 454.5,138.3 455.5,141.0 456.5,143.6 457.5,145.5 458.5,145.5 459.5,144.7 460.5,142.0 461.5,139.4 462.5,137.5 463.5,137.5 464.5,137.5 465.5,137.5 466.5,137.5 467.5,137.5 468.5,137.5 469.5,137.5 470.5,137.5 471.5,137.5 472.5,137.5 473.5,137.5 474.5,137.5 475.5,137.5 476.5,137.5 477.5,137.5 478.5,137.5 479.5,137.5 480.5,137.5 481.5,137.5 482.5,137.5 483.5,137.5 484.5,137.5 485.5,137.5 486.5,139.8 487.5,145.6 488.5,151.3 489.5,147.9 490.5,142.1 491.5,137.5 492.5,137.5 493.5,137.5 494.5,137.5 495.5,137.5 496.5,137.5 497.5,137.5 498.5,137.5 499.5,137.5 500.5,137.5 501.5,137.5 502.5,137.5 503.5,141.0 504.5,146.7 505.5,152.5 506.5,146.7 507.5,141.0 508.5,137.5 509.5,137.5 510.5,137.5 511.5,137.5 512.5,137.5 513.5,137.5 514.5,137.5 515.5,137.5"/>
<rect x="62" y="290" width="1" height="33" fill="#ff9000"/>
<polyline fill="none" stroke="#fff020" stroke-width="1.6" shape-rendering="auto" points="62.5,293.0 63.5,291.5 64.5,290.5 65.5,291.5 66.5,289.5 67.5,289.0 68.5,288.5 69.5,289.0 70.5,290.0 71.5,289.0 72.5,290.4 73.5,290.9 74.5,288.9 75.5,289.9 76.5,290.9 77.5,290.4 78.5,289.9 79.5,290.9 80.5,288.9 81.5,288.4 82.5,291.4 83.5,289.9 84.5,290.4 85.5,291.4 86.5,289.9 87.5,290.3 88.5,290.3 89.5,291.3 90.5,288.3 91.5,290.8 92.5,289.8 93.5,290.8 94.5,288.3 95.5,290.8 96.5,288.3 97.5,291.3 98.5,288.8 99.5,288.3 100.5,289.8 101.5,289.8 102.5,288.7 103.5,290.2 104.5,290.2 105.5,289.7 106.5,290.2 107.5,288.2 108.5,289.7 109.5,290.2 110.5,289.7 111.5,289.7 112.5,288.2 113.5,288.7 114.5,288.2 115.5,289.7 116.5,288.7 117.5,291.1 118.5,291.1 119.5,290.6 120.5,289.6 121.5,290.6 122.5,291.1 123.5,289.1 124.5,291.1 125.5,289.1 126.5,288.1 127.5,289.6 128.5,289.1 129.5,289.6 130.5,290.1 131.5,290.1 132.5,291.1 133.5,290.0 134.5,288.5 135.5,289.5 136.5,290.5 137.5,289.0 138.5,289.5 139.5,290.5 140.5,288.5 141.5,288.0 142.5,291.0 143.5,290.0 144.5,289.0 145.5,290.5 146.5,288.5 147.5,288.5 148.5,289.4 149.5,288.4 150.5,289.4 151.5,288.4 152.5,290.4 153.5,290.9 154.5,290.9 155.5,288.9 156.5,289.4 157.5,288.9 158.5,290.4 159.5,290.9 160.5,289.4 161.5,288.4 162.5,289.4 163.5,289.3 164.5,289.3 165.5,289.3 166.5,289.8 167.5,289.3 168.5,289.3 169.5,289.3 170.5,290.8 171.5,289.3 172.5,288.8 173.5,289.3 174.5,289.3 175.5,288.8 176.5,289.2 177.5,289.2 178.5,289.7 179.5,288.2 180.5,290.2 181.5,289.2 182.5,289.2 183.5,289.2 184.5,288.2 185.5,290.7 186.5,287.7 187.5,288.1 188.5,287.6 189.5,290.6 190.5,289.1 191.5,290.6 192.5,289.6 193.5,287.6 194.5,289.1 195.5,289.1 196.5,288.1 197.5,287.5 198.5,289.0 199.5,289.0 200.5,288.0 201.5,289.5 202.5,288.5 203.5,290.5 204.5,289.0 205.5,287.5 206.5,288.0 207.5,289.5 208.5,288.9 209.5,287.4 210.5,289.4 211.5,289.4 212.5,288.4 213.5,287.4 214.5,288.9 215.5,288.9 216.5,287.4 217.5,288.9 218.5,287.4 219.5,289.3 220.5,289.8 221.5,289.3 222.5,288.3 223.5,288.8 224.5,287.8 225.5,288.8 226.5,287.3 227.5,290.3 228.5,290.3 229.5,287.7 230.5,289.7 231.5,287.7 232.5,289.7 233.5,288.2 234.5,287.7 235.5,288.2 236.5,289.7 237.5,288.7 238.5,289.7 239.5,288.7 240.5,288.6 241.5,289.6 242.5,287.1 243.5,288.6 244.5,289.1 245.5,289.6 246.5,289.4 247.5,286.6 248.5,288.4 249.5,287.7 250.5,288.4 251.5,288.2 252.5,286.9 253.5,285.2 254.5,287.5 255.5,285.7 256.5,287.0 257.5,284.8 258.5,284.7 259.5,286.5 260.5,285.8 261.5,286.7 262.5,284.5 263.5,284.3 264.5,283.2 265.5,283.0 266.5,283.8 267.5,285.2 268.5,283.0 269.5,284.2 270.5,283.0 271.5,282.8 272.5,283.5 273.5,282.8 274.5,282.0 275.5,281.8 276.5,281.0 277.5,280.8 278.5,282.5 279.5,282.8 280.5,281.0 281.5,281.5 282.5,281.5 283.5,281.0 284.5,284.5 285.5,283.9 286.5,282.3 287.5,285.2 288.5,283.7 289.5,284.6 290.5,285.5 291.5,286.6 292.5,285.7 293.5,287.3 294.5,285.4 295.5,286.0 296.5,284.6 297.5,287.2 298.5,285.8 299.5,287.4 300.5,287.0 301.5,285.5 302.5,286.0 303.5,286.6 304.5,286.6 305.5,285.1 306.5,285.1 307.5,287.1 308.5,285.6 309.5,287.6 310.5,288.2 311.5,286.7 312.5,287.7 313.5,286.7 314.5,286.7 315.5,287.8 316.5,287.8 317.5,287.3 318.5,288.3 319.5,288.3 320.5,286.3 321.5,285.4 322.5,285.4 323.5,288.4 324.5,288.4 325.5,286.9 326.5,288.4 327.5,288.4 328.5,286.5 329.5,288.5 330.5,288.0 331.5,285.9 332.5,285.9 333.5,286.3 334.5,287.3 335.5,287.7 336.5,287.1 337.5,285.6 338.5,288.0 339.5,285.0 340.5,284.9 341.5,285.8 342.5,285.3 343.5,286.7 344.5,285.2 345.5,284.6 346.5,287.0 347.5,285.5 348.5,284.4 349.5,284.9 350.5,284.8 351.5,285.7 352.5,285.2 353.5,287.1 354.5,285.6 355.5,285.0 356.5,285.4 357.5,284.2 358.5,285.6 359.5,284.9 360.5,284.3 361.5,285.1 362.5,284.5 363.5,285.8 364.5,283.7 365.5,284.0 366.5,285.4 367.5,283.7 368.5,283.6 369.5,283.4 370.5,283.8 371.5,283.6 372.5,281.5 373.5,283.0 374.5,282.5 375.5,283.9 376.5,282.4 377.5,282.9 378.5,283.4 379.5,283.9 380.5,282.3 381.5,282.8 382.5,281.8 383.5,281.3 384.5,283.3 385.5,284.2 386.5,281.7 387.5,282.7 388.5,283.7 389.5,283.2 390.5,282.7 391.5,283.6 392.5,283.1 393.5,282.1 394.5,283.1 395.5,283.1 396.5,281.5 397.5,284.0 398.5,282.5 399.5,282.0 400.5,280.9 401.5,282.4 402.5,282.3 403.5,282.3 404.5,282.7 405.5,280.7 406.5,280.6 407.5,282.1 408.5,281.5 409.5,282.0 410.5,282.9 411.5,282.9 412.5,282.3 413.5,280.3 414.5,281.2 415.5,283.2 416.5,281.7 417.5,280.1 418.5,280.1 419.5,280.0 420.5,280.0 421.5,281.9 422.5,281.4 423.5,280.3 424.5,281.8 425.5,281.2 426.5,282.2 427.5,281.1 428.5,280.6 429.5,281.0 430.5,281.5 431.5,282.4 432.5,280.4 433.5,280.4 434.5,279.3 435.5,280.8 436.5,280.2 437.5,282.1 438.5,279.6 439.5,279.6 440.5,280.0 441.5,280.4 442.5,281.4 443.5,280.4 444.5,278.8 445.5,278.8 446.5,280.7 447.5,281.6 448.5,281.6 449.5,280.1 450.5,279.5 451.5,278.4 452.5,278.4 453.5,278.4 454.5,278.3 455.5,280.8 456.5,279.2 457.5,279.6 458.5,279.1 459.5,278.1 460.5,278.5 461.5,277.9 462.5,279.4 463.5,278.9 464.5,280.3 465.5,279.2 466.5,280.2 467.5,278.6 468.5,279.1 469.5,278.1 470.5,279.0 471.5,277.4 472.5,280.2 473.5,277.1 474.5,279.4 475.5,279.3 476.5,279.6 477.5,277.0 478.5,275.5 479.5,269.5 480.5,269.0 481.5,272.2 482.5,277.5 483.5,277.5 484.5,276.0 485.5,276.5 486.5,278.0 487.5,277.5 488.5,276.0 489.5,277.5 490.5,278.5 491.5,277.5 492.5,277.5 493.5,277.5 494.5,276.5 495.5,276.0 496.5,277.0 497.5,277.5 498.5,277.5 499.5,277.5 500.5,277.0 501.5,278.0 502.5,277.5 503.5,278.5 504.5,278.0 505.5,277.5 506.5,278.5 507.5,279.0 508.5,279.0 509.5,276.0 510.5,276.0 511.5,278.5 512.5,277.5 513.5,277.5 514.5,277.5 515.5,278.5"/>
<rect x="516" y="67" width="1" height="105" fill="#fff"/>
<rect x="516" y="172" width="1" height="28" fill="#7090b0"/>
<rect x="516" y="217" width="1" height="134" fill="#fff"/>
<rect x="58" y="200" width="3" height="1" fill="#000"/>
<rect x="60" y="186" width="1" height="1" fill="#000080"/>
<rect x="58" y="173" width="3" height="1" fill="#000"/>
<rect x="60" y="160" width="1" height="1" fill="#000080"/>
<rect x="58" y="147" width="3" height="1" fill="#000"/>
<rect x="60" y="134" width="1" height="1" fill="#000080"/>
<rect x="58" y="121" width="3" height="1" fill="#000"/>
<rect x="60" y="108" width="1" height="1" fill="#000080"/>
<rect x="58" y="95" width="3" height="1" fill="#000"/>
<rect x="60" y="82" width="1" height="1" fill="#000080"/>
<rect x="58" y="68" width="3" height="1" fill="#000"/>
<rect x="531" y="198" width="2" height="1" fill="#000"/>
<rect x="531" y="183" width="2" height="1" fill="#000"/>
<rect x="531" y="168" width="2" height="1" fill="#000"/>
<rect x="531" y="152" width="2" height="1" fill="#000"/>
<rect x="531" y="137" width="2" height="1" fill="#000"/>
<rect x="531" y="122" width="2" height="1" fill="#000"/>
<rect x="531" y="106" width="2" height="1" fill="#000"/>
<rect x="531" y="91" width="2" height="1" fill="#000"/>
<rect x="531" y="75" width="2" height="1" fill="#000"/>
<rect x="58" y="350" width="3" height="1" fill="#000"/>
<rect x="60" y="337" width="1" height="1" fill="#000080"/>
<rect x="58" y="323" width="3" height="1" fill="#000"/>
<rect x="60" y="310" width="1" height="1" fill="#000080"/>
<rect x="58" y="297" width="3" height="1" fill="#000"/>
<rect x="60" y="284" width="1" height="1" fill="#000080"/>
<rect x="58" y="271" width="3" height="1" fill="#000"/>
<rect x="60" y="258" width="1" height="1" fill="#000080"/>
<rect x="58" y="244" width="3" height="1" fill="#000"/>
<rect x="60" y="231" width="1" height="1" fill="#000080"/>
<rect x="58" y="218" width="3" height="1" fill="#000"/>
</svg>
<div style="position:absolute;left:0;top:0;width:743px;height:444px;will-change:transform">
<span class="t" id="t0" style="top:6.3px;color:#fff;font-size:12px;letter-spacing:-0.035px;left:3.8px;">CD Speed : Disc Quality Test - BENQ</span>
<span class="t" id="t1" style="top:6.3px;color:#fff;font-size:12px;letter-spacing:-0.586px;left:217.0px;">DVD DD DW1640</span>
<span class="t" id="t2" style="top:6.3px;color:#fff;font-size:12px;letter-spacing:-0.672px;left:322.0px;">BSMB</span>
<span class="t" id="t3" style="top:32.5px;color:#000;font-size:12px;letter-spacing:-0.138px;left:22.0px;">Disc Quality</span>
<span class="t" id="t4" style="top:52.8px;color:#000;font-size:12px;letter-spacing:-0.284px;right:213.3px;">recorded with TSSTcorpCD/DVDW SDR5372V vBA13</span>
<span class="t" id="t5" style="top:61.7px;color:#000;font-size:12px;letter-spacing:-1.359px;right:690.4px;">20</span>
<span class="t" id="t6" style="top:88.7px;color:#000;font-size:12px;letter-spacing:-1.359px;right:690.4px;">16</span>
<span class="t" id="t7" style="top:114.7px;color:#000;font-size:12px;letter-spacing:-1.359px;right:690.4px;">12</span>
<span class="t" id="t8" style="top:140.7px;color:#000;font-size:12px;letter-spacing:-0.188px;right:689.2px;">8</span>
<span class="t" id="t9" style="top:166.7px;color:#000;font-size:12px;letter-spacing:-0.188px;right:689.2px;">4</span>
<span class="t" id="t10" style="top:69.2px;color:#000;font-size:12px;letter-spacing:-1.859px;left:532.8px;">16</span>
<span class="t" id="t11" style="top:84.6px;color:#000;font-size:12px;letter-spacing:-1.859px;left:532.8px;">14</span>
<span class="t" id="t12" style="top:100.0px;color:#000;font-size:12px;letter-spacing:-1.859px;left:532.8px;">12</span>
<span class="t" id="t13" style="top:115.4px;color:#000;font-size:12px;letter-spacing:-1.859px;left:532.8px;">10</span>
<span class="t" id="t14" style="top:130.8px;color:#000;font-size:12px;letter-spacing:-0.188px;left:532.8px;">8</span>
<span class="t" id="t15" style="top:146.2px;color:#000;font-size:12px;letter-spacing:-0.188px;left:532.8px;">6</span>
<span class="t" id="t16" style="top:161.6px;color:#000;font-size:12px;letter-spacing:-0.188px;left:532.8px;">4</span>
<span class="t" id="t17" style="top:177.0px;color:#000;font-size:12px;letter-spacing:-0.188px;left:532.8px;">2</span>
<span class="t" id="t18" style="top:201.2px;color:#000;font-size:12px;letter-spacing:-0.844px;left:63.4px;transform:translateX(-50%);">0.0</span>
<span class="t" id="t19" style="top:351.4px;color:#000;font-size:12px;letter-spacing:-0.844px;left:63.4px;transform:translateX(-50%);">0.0</span>
<span class="t" id="t20" style="top:201.2px;color:#000;font-size:12px;letter-spacing:-0.844px;left:114.0px;transform:translateX(-50%);">0.5</span>
<span class="t" id="t21" style="top:351.4px;color:#000;font-size:12px;letter-spacing:-0.844px;left:114.0px;transform:translateX(-50%);">0.5</span>
<span class="t" id="t22" style="top:201.2px;color:#000;font-size:12px;letter-spacing:-0.844px;left:166.0px;transform:translateX(-50%);">1.0</span>
<span class="t" id="t23" style="top:351.4px;color:#000;font-size:12px;letter-spacing:-0.844px;left:166.0px;transform:translateX(-50%);">1.0</span>
<span class="t" id="t24" style="top:201.2px;color:#000;font-size:12px;letter-spacing:-0.844px;left:218.0px;transform:translateX(-50%);">1.5</span>
<span class="t" id="t25" style="top:351.4px;color:#000;font-size:12px;letter-spacing:-0.844px;left:218.0px;transform:translateX(-50%);">1.5</span>
<span class="t" id="t26" style="top:201.2px;color:#000;font-size:12px;letter-spacing:-0.844px;left:270.0px;transform:translateX(-50%);">2.0</span>
<span class="t" id="t27" style="top:351.4px;color:#000;font-size:12px;letter-spacing:-0.844px;left:270.0px;transform:translateX(-50%);">2.0</span>
<span class="t" id="t28" style="top:201.2px;color:#000;font-size:12px;letter-spacing:-0.844px;left:322.0px;transform:translateX(-50%);">2.5</span>
<span class="t" id="t29" style="top:351.4px;color:#000;font-size:12px;letter-spacing:-0.844px;left:322.0px;transform:translateX(-50%);">2.5</span>
<span class="t" id="t30" style="top:201.2px;color:#000;font-size:12px;letter-spacing:-0.844px;left:374.0px;transform:translateX(-50%);">3.0</span>
<span class="t" id="t31" style="top:351.4px;color:#000;font-size:12px;letter-spacing:-0.844px;left:374.0px;transform:translateX(-50%);">3.0</span>
<span class="t" id="t32" style="top:201.2px;color:#000;font-size:12px;letter-spacing:-0.844px;left:426.0px;transform:translateX(-50%);">3.5</span>
<span class="t" id="t33" style="top:351.4px;color:#000;font-size:12px;letter-spacing:-0.844px;left:426.0px;transform:translateX(-50%);">3.5</span>
<span class="t" id="t34" style="top:201.2px;color:#000;font-size:12px;letter-spacing:-0.844px;left:478.0px;transform:translateX(-50%);">4.0</span>
<span class="t" id="t35" style="top:351.4px;color:#000;font-size:12px;letter-spacing:-0.844px;left:478.0px;transform:translateX(-50%);">4.0</span>
<span class="t" id="t36" style="top:201.2px;color:#000;font-size:12px;letter-spacing:-0.844px;left:529.8px;transform:translateX(-50%);">4.5</span>
<span class="t" id="t37" style="top:351.4px;color:#000;font-size:12px;letter-spacing:-0.844px;left:529.8px;transform:translateX(-50%);">4.5</span>
<span class="t" id="t38" style="top:211.7px;color:#000;font-size:12px;letter-spacing:-1.359px;right:690.4px;">50</span>
<span class="t" id="t39" style="top:237.7px;color:#000;font-size:12px;letter-spacing:-1.359px;right:690.4px;">40</span>
<span class="t" id="t40" style="top:264.7px;color:#000;font-size:12px;letter-spacing:-1.359px;right:690.4px;">30</span>
<span class="t" id="t41" style="top:290.7px;color:#000;font-size:12px;letter-spacing:-1.359px;right:690.4px;">20</span>
<span class="t" id="t42" style="top:316.7px;color:#000;font-size:12px;letter-spacing:-1.359px;right:690.4px;">10</span>
<span class="t" id="t43" style="top:211.7px;color:#000;font-size:12px;letter-spacing:-1.359px;left:532.4px;">20</span>
<span class="t" id="t44" style="top:237.7px;color:#000;font-size:12px;letter-spacing:-1.359px;left:532.4px;">16</span>
<span class="t" id="t45" style="top:264.7px;color:#000;font-size:12px;letter-spacing:-1.359px;left:532.4px;">12</span>
<span class="t" id="t46" style="top:290.7px;color:#000;font-size:12px;letter-spacing:-0.188px;left:532.4px;">8</span>
<span class="t" id="t47" style="top:316.7px;color:#000;font-size:12px;letter-spacing:-0.188px;left:532.4px;">4</span>
<span class="t" id="t48" style="top:362.8px;color:#000;font-size:12px;letter-spacing:-0.418px;left:41.0px;">PI Errors</span>
<span class="t" id="t49" style="top:377.3px;color:#000;font-size:12px;letter-spacing:-0.172px;left:27.0px;">平均:</span>
<span class="t" id="t50" style="top:395.0px;color:#000;font-size:12px;letter-spacing:-0.172px;left:27.0px;">最大:</span>
<span class="t" id="t51" style="top:413.3px;color:#000;font-size:12px;letter-spacing:-0.226px;left:27.0px;">合計 :</span>
<span class="t" id="t52" style="top:377.3px;color:#0a0aa0;font-size:12px;letter-spacing:-0.790px;right:567.8px;">2.85</span>
<span class="t" id="t53" style="top:395.0px;color:#0a0aa0;font-size:12px;letter-spacing:-1.359px;right:569.4px;">18</span>
<span class="t" id="t54" style="top:413.3px;color:#0a0aa0;font-size:12px;letter-spacing:-0.844px;right:568.8px;">27420</span>
<span class="t" id="t55" style="top:362.8px;color:#000;font-size:12px;letter-spacing:-0.286px;left:220.5px;">PI Failures</span>
<span class="t" id="t56" style="top:377.3px;color:#000;font-size:12px;letter-spacing:-0.172px;left:209.0px;">平均:</span>
<span class="t" id="t57" style="top:395.0px;color:#000;font-size:12px;letter-spacing:-0.172px;left:209.0px;">最大:</span>
<span class="t" id="t58" style="top:413.3px;color:#000;font-size:12px;letter-spacing:-0.226px;left:209.0px;">合計 :</span>
<span class="t" id="t59" style="top:377.3px;color:#0a0aa0;font-size:12px;letter-spacing:-0.790px;right:386.3px;">1.17</span>
<span class="t" id="t60" style="top:395.0px;color:#0a0aa0;font-size:12px;letter-spacing:-1.359px;right:386.9px;">23</span>
<span class="t" id="t61" style="top:413.3px;color:#0a0aa0;font-size:12px;letter-spacing:-0.844px;right:386.3px;">10526</span>
<span class="t" id="t62" style="top:362.8px;color:#000;font-size:12px;letter-spacing:0.098px;left:402.0px;">Jitter</span>
<span class="t" id="t63" style="top:377.3px;color:#000;font-size:12px;letter-spacing:-0.172px;left:389.0px;">平均:</span>
<span class="t" id="t64" style="top:395.0px;color:#000;font-size:12px;letter-spacing:-0.172px;left:389.0px;">最大:</span>
<span class="t" id="t65" style="top:377.3px;color:#0a0aa0;font-size:12px;letter-spacing:-0.953px;right:216.7px;">9.49</span>
<span class="t" id="t66" style="top:395.0px;color:#0a0aa0;font-size:12px;letter-spacing:-0.953px;right:216.7px;">12.3</span>
<span class="t" id="t67" style="top:377.3px;color:#0a0aa0;font-size:10px;letter-spacing:-0.895px;right:205.3px;">%</span>
<span class="t" id="t68" style="top:395.0px;color:#0a0aa0;font-size:10px;letter-spacing:-0.907px;right:205.3px;">%</span>
<span class="t" id="t69" style="top:418.0px;color:#000;font-size:12px;letter-spacing:-0.426px;left:389.0px;">PO Failures:</span>
<span class="t" id="t70" style="top:418.0px;color:#0a0aa0;font-size:12px;letter-spacing:-0.189px;right:205.2px;">0</span>
<span class="t" id="t71" style="top:56.0px;color:#000;font-size:12px;letter-spacing:0.000px;left:595.5px;transform:translateX(-50%);">開始</span>
<span class="t" id="t72" style="top:56.0px;color:#000;font-size:12px;letter-spacing:0.498px;left:686.2px;transform:translateX(-50%);">終了(<u>X</u>)</span>
<span class="t" id="t73" style="top:75.8px;color:#000;font-size:12px;letter-spacing:-1.000px;left:570.0px;"><span style="letter-spacing:-3px">ディスク</span>情報</span>
<span class="t" id="t74" style="top:88.7px;color:#000;font-size:12px;letter-spacing:-0.344px;left:568.5px;"><span style="letter-spacing:-3px">タイプ</span>:</span>
<span class="t" id="t75" style="top:88.5px;color:#0a0aa0;font-size:12px;letter-spacing:-0.504px;left:616.5px;">DVD+R</span>
<span class="t" id="t76" style="top:103.5px;color:#000;font-size:12px;letter-spacing:-0.672px;left:568.5px;">ID:</span>
<span class="t" id="t77" style="top:103.5px;color:#0a0aa0;font-size:12px;letter-spacing:-0.751px;left:616.5px;">SONY D11</span>
<span class="t" id="t78" style="top:118.7px;color:#000;font-size:12px;letter-spacing:-0.672px;left:568.5px;">日付:</span>
<span class="t" id="t79" style="top:118.5px;color:#0a0aa0;font-size:12px;letter-spacing:-0.364px;left:616.5px;">3 October 2005</span>
<span class="t" id="t80" style="top:133.5px;color:#000;font-size:12px;letter-spacing:-0.741px;left:568.5px;">Label:</span>
<span class="t" id="t81" style="top:133.5px;color:#0a0aa0;font-size:12px;letter-spacing:-1.003px;left:616.5px;">CDS_TEST_B2</span>
<span class="t" id="t82" style="top:149.7px;color:#000;font-size:12px;letter-spacing:-0.196px;left:569.0px;">Settings</span>
<span class="t" id="t83" style="top:167.2px;color:#000;font-size:12px;letter-spacing:0.000px;left:569.0px;">転送速度</span>
<span class="t" id="t84" style="top:167.7px;color:#000;font-size:12px;letter-spacing:0.487px;left:634.0px;">4 X</span>
<span class="t" id="t85" style="top:192.0px;color:#000;font-size:12px;letter-spacing:0.000px;left:569.0px;">開始</span>
<span class="t" id="t86" style="top:191.5px;color:#000;font-size:12px;letter-spacing:-0.341px;left:633.0px;">0000 MB</span>
<span class="t" id="t87" style="top:214.5px;color:#000;font-size:12px;letter-spacing:-0.000px;left:569.0px;">終了位置</span>
<span class="t" id="t88" style="top:214.5px;color:#000;font-size:12px;letter-spacing:-0.341px;left:633.0px;">4482 MB</span>
<span class="t" id="t89" style="top:235.7px;color:#000;font-size:12px;letter-spacing:-0.264px;left:586.5px;">Quick Scan</span>
<span class="t" id="t90" style="top:255.3px;color:#000;font-size:12px;letter-spacing:-0.337px;left:586.5px;">Show C1/PIE</span>
<span class="t" id="t91" style="top:269.8px;color:#000;font-size:12px;letter-spacing:-0.270px;left:586.5px;">Show C2/PIF</span>
<span class="t" id="t92" style="top:285.1px;color:#000;font-size:12px;letter-spacing:-0.036px;left:586.5px;">Show Jitter</span>
<span class="t" id="t93" style="top:300.1px;color:#000;font-size:12px;letter-spacing:-0.505px;left:586.5px;">Show Read Speed</span>
<span class="t" id="t94" style="top:315.1px;color:#000;font-size:12px;letter-spacing:-0.411px;left:586.5px;">Show Write Speed</span>
<span class="t" id="t95" style="top:344.0px;color:#000;font-size:12px;letter-spacing:-0.680px;left:569.0px;">品質<span style="letter-spacing:-3px">スコア</span>:</span>
<span class="t" id="t96" style="top:344.0px;color:#0a0aa0;font-size:12px;letter-spacing:-1.349px;right:38.3px;">70</span>
<span class="t" id="t97" style="top:375.7px;color:#000;font-size:12px;letter-spacing:-0.087px;left:569.0px;">進行状況:</span>
<span class="t" id="t98" style="top:375.7px;color:#0a0aa0;font-size:12px;letter-spacing:-1.011px;right:48.5px;">100</span>
<span class="t" id="t99" style="top:375.7px;color:#0a0aa0;font-size:10px;letter-spacing:-0.906px;right:36.9px;">%</span>
<span class="t" id="t100" style="top:394.5px;color:#000;font-size:12px;letter-spacing:2.656px;left:569.0px;"><span style="letter-spacing:-3px">ポジション</span>:</span>
<span class="t" id="t101" style="top:394.5px;color:#0a0aa0;font-size:12px;letter-spacing:-0.768px;right:37.3px;">4481  MB</span>
<span class="t" id="t102" style="top:413.0px;color:#000;font-size:12px;letter-spacing:-0.172px;left:569.0px;">速度:</span>
<span class="t" id="t103" style="top:413.0px;color:#0a0aa0;font-size:12px;letter-spacing:-0.141px;right:34.6px;">4.18 X</span>
</div>
</body></html>
